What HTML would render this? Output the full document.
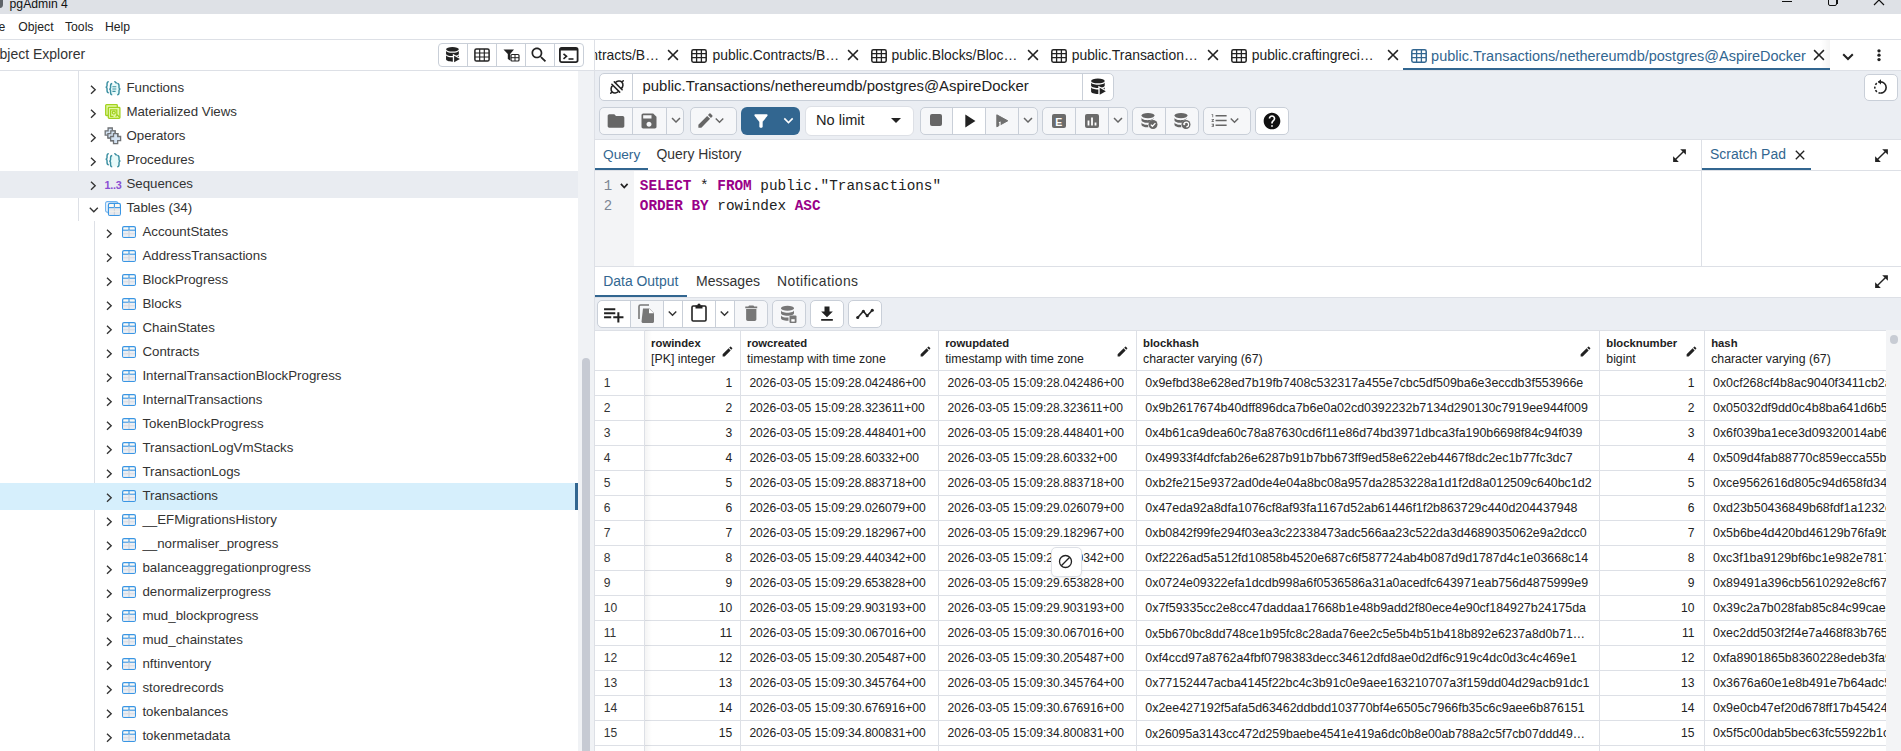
<!DOCTYPE html><html><head><meta charset="utf-8"><style>
html,body{margin:0;padding:0;}
body{width:1901px;height:751px;overflow:hidden;position:relative;background:#fff;font-family:"Liberation Sans",sans-serif;}
.t{position:absolute;white-space:nowrap;}
.b{position:absolute;box-sizing:border-box;}
</style></head><body>
<div class="b" style="left:0px;top:0px;width:1901px;height:13.5px;background:#dee1e6"></div>
<div class="b" style="left:1782px;top:1px;width:10px;height:1px;background:#111"></div>
<div class="b" style="left:1828px;top:-4px;width:9px;height:10px;border:1.2px solid #111;border-radius:2px"></div>
<div class="b" style="left:1836px;top:-2px;width:2px;height:6px;background:#111"></div>
<svg class="b" style="left:1873px;top:-6px;overflow:visible;" width="12" height="12" viewBox="0 0 12 12"><path d="M1 1L11 11M11 1L1 11" stroke="#111" stroke-width="1.2"/></svg>
<div class="b" style="left:-4px;top:-4px;width:7px;height:11.5px;background:#5f6368;border-radius:4px"></div>
<div class="t" style="left:9.6px;top:-1.74px;font-size:12.2px;line-height:13.63px;color:#111;font-weight:400;font-family:'Liberation Sans', sans-serif;">pgAdmin 4</div>
<div class="t" style="left:-1.5px;top:20.96px;font-size:12.2px;line-height:13.63px;color:#222;font-weight:400;font-family:'Liberation Sans', sans-serif;">e</div>
<div class="t" style="left:18.3px;top:20.96px;font-size:12.2px;line-height:13.63px;color:#222;font-weight:400;font-family:'Liberation Sans', sans-serif;">Object</div>
<div class="t" style="left:65px;top:20.96px;font-size:12.2px;line-height:13.63px;color:#222;font-weight:400;font-family:'Liberation Sans', sans-serif;">Tools</div>
<div class="t" style="left:105px;top:20.96px;font-size:12.2px;line-height:13.63px;color:#222;font-weight:400;font-family:'Liberation Sans', sans-serif;">Help</div>
<div class="b" style="left:0px;top:39px;width:1901px;height:1px;background:#dde0e6"></div>
<div class="t" style="left:-0.5px;top:47.13px;font-size:14px;line-height:15.64px;color:#333;font-weight:400;font-family:'Liberation Sans', sans-serif;">bject Explorer</div>
<div class="b" style="left:438px;top:43px;width:146px;height:24px;border:1px solid #c9cfd8;border-radius:4px;background:#fff"></div>
<div class="b" style="left:467px;top:43px;width:1px;height:24px;background:#c9cfd8"></div>
<div class="b" style="left:496px;top:43px;width:1px;height:24px;background:#c9cfd8"></div>
<div class="b" style="left:525px;top:43px;width:1px;height:24px;background:#c9cfd8"></div>
<div class="b" style="left:554px;top:43px;width:1px;height:24px;background:#c9cfd8"></div>
<svg class="b" style="left:444.5px;top:47px;overflow:visible;" width="16" height="16" viewBox="0 0 20 20"><ellipse cx="9.3" cy="2.9" rx="8" ry="2.8" fill="#222"/><path d="M1.3 4.4V8.3c0 1.6 3.6 2.9 8 2.9s8-1.3 8-2.9V4.4c0 1.6-3.6 2.9-8 2.9S1.3 6.0 1.3 4.4z" fill="#222"/><path d="M1.3 9.9V15.4c0 1.6 3.6 2.9 8 2.9s8-1.3 8-2.9V9.9c0 1.6-3.6 2.9-8 2.9S1.3 11.5 1.3 9.9z" fill="#222"/><path d="M9.8 8.4V21.6L21.2 15z" fill="#fff"/><path d="M11.4 10.9V19.1L18.6 15z" fill="#222"/></svg>
<svg class="b" style="left:473.5px;top:48px;overflow:visible;" width="16" height="14" viewBox="0 0 16 14"><rect x="0.9" y="0.9" width="14.2" height="12.2" rx="1.6" fill="none" stroke="#222" stroke-width="1.5"/><path d="M1 5H15M1 9H15M5.7 1V13M10.3 1V13" stroke="#222" stroke-width="1.15"/></svg>
<svg class="b" style="left:503px;top:48.5px;overflow:visible;" width="16" height="12.5" viewBox="0 0 16 12.5"><path d="M0.5 0.5H11L7.2 5V11.5L4.8 10V5z" fill="#222"/><rect x="8" y="5.5" width="8" height="6.5" rx="1" fill="none" stroke="#222" stroke-width="1.2"/><path d="M8 8.7H16M12 5.5V12" stroke="#222" stroke-width="1"/></svg>
<svg class="b" style="left:529px;top:45px;overflow:visible;" width="20" height="20" viewBox="0 0 24 24"><path d="M15.5 14h-.79l-.28-.27C15.41 12.59 16 11.11 16 9.5 16 5.91 13.09 3 9.5 3S3 5.91 3 9.5 5.91 16 9.5 16c1.61 0 3.09-.59 4.23-1.57l.27.28v.79l5 4.99L20.49 19l-4.99-5zm-6 0C7.01 14 5 11.99 5 9.5S7.01 5 9.5 5 14 7.01 14 9.5 11.99 14 9.5 14z" fill="#222"/></svg>
<svg class="b" style="left:559px;top:47px;overflow:visible;" width="19.5" height="16" viewBox="0 0 19.5 16"><rect x="0.9" y="0.9" width="17.7" height="14.2" rx="1.8" fill="none" stroke="#222" stroke-width="1.8"/><rect x="0.9" y="0.9" width="17.7" height="2.6" fill="#222"/><path d="M4.5 6.8L7.5 9.3L4.5 11.8" fill="none" stroke="#222" stroke-width="1.6"/><path d="M9.5 12H14.5" stroke="#222" stroke-width="1.6"/></svg>
<div class="b" style="left:0px;top:70px;width:594px;height:1px;background:#dde0e6"></div>
<div class="b" style="left:78px;top:71px;width:1px;height:150px;background:#dde0e6"></div>
<div class="b" style="left:94px;top:221px;width:1px;height:530px;background:#dde0e6"></div>
<div class="b" style="left:0px;top:171px;width:578px;height:27px;background:#e9ecf1"></div>
<div class="b" style="left:0px;top:483px;width:575px;height:27px;background:#d6effc"></div>
<div class="b" style="left:575px;top:483px;width:3px;height:27px;background:#326690"></div>
<svg class="b" style="left:89.6px;top:84.6px;overflow:visible;" width="7" height="10" viewBox="0 0 7 10"><path d="M1 0.8L5.2 4.8L1 8.8" fill="none" stroke="#333" stroke-width="1.35"/></svg>
<svg class="b" style="left:105px;top:80.9px;overflow:visible;" width="16" height="14.2" viewBox="0 0 16 14.2"><path d="M6.5 2.8H12.8C13.6 5 13.6 11 12.8 13.4H6.5C5.7 11 5.7 5 6.5 2.8z" fill="#e6fafa"/><path d="M3.8000000000000003 0.6C2.04 0.6 2.04 1.496 2.04 2.84V4.855999999999999C2.04 5.752 1.2400000000000002 6.199999999999999 0.6 6.199999999999999C1.2400000000000002 6.199999999999999 2.04 6.648 2.04 7.544V9.559999999999999C2.04 10.904 2.04 11.799999999999999 3.8000000000000003 11.799999999999999" fill="none" stroke="#3a8fa1" stroke-width="1.45"/><path d="M9.2 0.6C10.6 0.6 10.8 1.6 11.6 2.4" fill="none" stroke="#3a8fa1" stroke-width="1.45"/><path d="M7.2 2.6C5.550000000000001 2.6 5.550000000000001 3.496 5.550000000000001 4.84V6.856C5.550000000000001 7.752000000000001 4.800000000000001 8.2 4.2 8.2C4.800000000000001 8.2 5.550000000000001 8.648 5.550000000000001 9.544V11.559999999999999C5.550000000000001 12.904 5.550000000000001 13.799999999999999 7.2 13.799999999999999" fill="none" stroke="#3a8fa1" stroke-width="1.45"/><path d="M12.2 2.4C14.014999999999999 2.4 14.014999999999999 3.304 14.014999999999999 4.66V6.694000000000001C14.014999999999999 7.598000000000001 14.84 8.05 15.5 8.05C14.84 8.05 14.014999999999999 8.502 14.014999999999999 9.406V11.440000000000001C14.014999999999999 12.796000000000001 14.014999999999999 13.700000000000001 12.2 13.700000000000001" fill="none" stroke="#3a8fa1" stroke-width="1.45"/><path d="M7.4 5.8H11.3M7.4 8H11.3M7.4 10.4H10.6" stroke="#3a8fa1" stroke-width="1.1"/></svg>
<div class="t" style="left:126.4px;top:80.76px;font-size:13.3px;line-height:14.86px;color:#333;font-weight:400;font-family:'Liberation Sans', sans-serif;">Functions</div>
<svg class="b" style="left:89.6px;top:108.6px;overflow:visible;" width="7" height="10" viewBox="0 0 7 10"><path d="M1 0.8L5.2 4.8L1 8.8" fill="none" stroke="#333" stroke-width="1.35"/></svg>
<svg class="b" style="left:105px;top:104.4px;overflow:visible;" width="16" height="15" viewBox="0 0 16 15"><rect x="0.7" y="0.7" width="11.6" height="10.8" rx="0.8" fill="#e3f8a6" stroke="#a2d21f" stroke-width="1.3"/><rect x="3.3" y="3.4" width="11.6" height="11" rx="0.8" fill="#e3f8a6" stroke="#a2d21f" stroke-width="1.3"/><path d="M11.8 11.5V5.8H5.6V12.4H8.5" fill="none" stroke="#a2d21f" stroke-width="1.2"/><circle cx="8.8" cy="8.6" r="1.5" fill="none" stroke="#a2d21f" stroke-width="1.2"/><path d="M10.5 12.5L12.5 11L14.8 13.5" fill="none" stroke="#a2d21f" stroke-width="1.2"/></svg>
<div class="t" style="left:126.4px;top:104.76px;font-size:13.3px;line-height:14.86px;color:#333;font-weight:400;font-family:'Liberation Sans', sans-serif;">Materialized Views</div>
<svg class="b" style="left:89.6px;top:132.6px;overflow:visible;" width="7" height="10" viewBox="0 0 7 10"><path d="M1 0.8L5.2 4.8L1 8.8" fill="none" stroke="#333" stroke-width="1.35"/></svg>
<svg class="b" style="left:105px;top:128.0px;overflow:visible;" width="16" height="16" viewBox="0 0 16 16"><path d="M3.1 0.0H7.300000000000001V2.9H10.2V7.1H7.300000000000001V10.0H3.1V7.1H0.20000000000000018V2.9H3.1Z" fill="#d3e2f2" stroke="#6f7275" stroke-width="1.3"/><path d="M5.800000000000001 2.8H10.0V5.699999999999999H12.9V9.9H10.0V12.8H5.800000000000001V9.9H2.9000000000000004V5.699999999999999H5.800000000000001Z" fill="#d3e2f2" stroke="#6f7275" stroke-width="1.3"/><path d="M8.5 5.6H12.7V8.5H15.6V12.7H12.7V15.6H8.5V12.7H5.6V8.5H8.5Z" fill="#d3e2f2" stroke="#6f7275" stroke-width="1.3"/></svg>
<div class="t" style="left:126.4px;top:128.76px;font-size:13.3px;line-height:14.86px;color:#333;font-weight:400;font-family:'Liberation Sans', sans-serif;">Operators</div>
<svg class="b" style="left:89.6px;top:156.6px;overflow:visible;" width="7" height="10" viewBox="0 0 7 10"><path d="M1 0.8L5.2 4.8L1 8.8" fill="none" stroke="#333" stroke-width="1.35"/></svg>
<svg class="b" style="left:105px;top:152.9px;overflow:visible;" width="16" height="14.2" viewBox="0 0 16 14.2"><path d="M6.5 2.8H12.8C13.6 5 13.6 11 12.8 13.4H6.5C5.7 11 5.7 5 6.5 2.8z" fill="#e6fafa"/><path d="M3.8000000000000003 0.6C2.04 0.6 2.04 1.496 2.04 2.84V4.855999999999999C2.04 5.752 1.2400000000000002 6.199999999999999 0.6 6.199999999999999C1.2400000000000002 6.199999999999999 2.04 6.648 2.04 7.544V9.559999999999999C2.04 10.904 2.04 11.799999999999999 3.8000000000000003 11.799999999999999" fill="none" stroke="#3a8fa1" stroke-width="1.45"/><path d="M9.2 0.6C10.6 0.6 10.8 1.6 11.6 2.4" fill="none" stroke="#3a8fa1" stroke-width="1.45"/><path d="M7.2 2.6C5.550000000000001 2.6 5.550000000000001 3.496 5.550000000000001 4.84V6.856C5.550000000000001 7.752000000000001 4.800000000000001 8.2 4.2 8.2C4.800000000000001 8.2 5.550000000000001 8.648 5.550000000000001 9.544V11.559999999999999C5.550000000000001 12.904 5.550000000000001 13.799999999999999 7.2 13.799999999999999" fill="none" stroke="#3a8fa1" stroke-width="1.45"/><path d="M12.2 2.4C14.014999999999999 2.4 14.014999999999999 3.304 14.014999999999999 4.66V6.694000000000001C14.014999999999999 7.598000000000001 14.84 8.05 15.5 8.05C14.84 8.05 14.014999999999999 8.502 14.014999999999999 9.406V11.440000000000001C14.014999999999999 12.796000000000001 14.014999999999999 13.700000000000001 12.2 13.700000000000001" fill="none" stroke="#3a8fa1" stroke-width="1.45"/></svg>
<div class="t" style="left:126.4px;top:152.76px;font-size:13.3px;line-height:14.86px;color:#333;font-weight:400;font-family:'Liberation Sans', sans-serif;">Procedures</div>
<svg class="b" style="left:89.6px;top:180.6px;overflow:visible;" width="7" height="10" viewBox="0 0 7 10"><path d="M1 0.8L5.2 4.8L1 8.8" fill="none" stroke="#333" stroke-width="1.35"/></svg>
<div class="t" style="left:104.6px;top:178.63px;font-size:10.8px;line-height:12.06px;color:#8a4fd3;font-weight:700;font-family:'Liberation Sans', sans-serif;letter-spacing:-0.3px">1..3</div>
<div class="t" style="left:126.4px;top:176.76px;font-size:13.3px;line-height:14.86px;color:#333;font-weight:400;font-family:'Liberation Sans', sans-serif;">Sequences</div>
<svg class="b" style="left:88.5px;top:206.5px;overflow:visible;" width="10" height="6" viewBox="0 0 10 6"><path d="M0.8 0.8L4.8 4.8L8.8 0.8" fill="none" stroke="#333" stroke-width="1.35"/></svg>
<svg class="b" style="left:105px;top:200.8px;overflow:visible;" width="16" height="15" viewBox="0 0 16 15"><rect x="0.6" y="0.6" width="12" height="10.6" rx="1.6" fill="#f2f7fc" stroke="#6fb2ee" stroke-width="1.1"/><rect x="3.4" y="2.4" width="12" height="12" rx="1.6" fill="#fbf8f2" stroke="#3a96e4" stroke-width="1.2"/><rect x="4" y="6.8" width="10.8" height="7" fill="#e6e9ee"/><path d="M3.4 6.6H15.4" stroke="#3a96e4" stroke-width="1.1"/><path d="M9.4 2.8V6.6" stroke="#3a96e4" stroke-width="1.1"/><path d="M9.4 6.6V14" stroke="#cdd3dc" stroke-width="1.1"/><path d="M4 10.3H15" stroke="#f5f2ea" stroke-width="0.9"/></svg>
<div class="t" style="left:126.4px;top:200.76px;font-size:13.3px;line-height:14.86px;color:#333;font-weight:400;font-family:'Liberation Sans', sans-serif;">Tables (34)</div>
<svg class="b" style="left:105.9px;top:228.6px;overflow:visible;" width="7" height="10" viewBox="0 0 7 10"><path d="M1 0.8L5.2 4.8L1 8.8" fill="none" stroke="#333" stroke-width="1.35"/></svg>
<svg class="b" style="left:122px;top:226.2px;overflow:visible;" width="14" height="12" viewBox="0 0 14 12"><rect x="0.6" y="0.6" width="12.8" height="10.8" rx="1.4" fill="#fbfaf6" stroke="#3a96e4" stroke-width="1.2"/><rect x="1.2" y="4.5" width="11.6" height="6.3" fill="#eceef2"/><path d="M0.6 4.2H13.4" stroke="#3a96e4" stroke-width="1.1"/><path d="M7 1V4.2" stroke="#3a96e4" stroke-width="1.1"/><path d="M7 4.2V11" stroke="#c9d0da" stroke-width="1.1"/><path d="M1 7.8H13" stroke="#d5dbe3" stroke-width="1"/></svg>
<div class="t" style="left:142.4px;top:224.76px;font-size:13.3px;line-height:14.86px;color:#333;font-weight:400;font-family:'Liberation Sans', sans-serif;">AccountStates</div>
<svg class="b" style="left:105.9px;top:252.6px;overflow:visible;" width="7" height="10" viewBox="0 0 7 10"><path d="M1 0.8L5.2 4.8L1 8.8" fill="none" stroke="#333" stroke-width="1.35"/></svg>
<svg class="b" style="left:122px;top:250.2px;overflow:visible;" width="14" height="12" viewBox="0 0 14 12"><rect x="0.6" y="0.6" width="12.8" height="10.8" rx="1.4" fill="#fbfaf6" stroke="#3a96e4" stroke-width="1.2"/><rect x="1.2" y="4.5" width="11.6" height="6.3" fill="#eceef2"/><path d="M0.6 4.2H13.4" stroke="#3a96e4" stroke-width="1.1"/><path d="M7 1V4.2" stroke="#3a96e4" stroke-width="1.1"/><path d="M7 4.2V11" stroke="#c9d0da" stroke-width="1.1"/><path d="M1 7.8H13" stroke="#d5dbe3" stroke-width="1"/></svg>
<div class="t" style="left:142.4px;top:248.76px;font-size:13.3px;line-height:14.86px;color:#333;font-weight:400;font-family:'Liberation Sans', sans-serif;">AddressTransactions</div>
<svg class="b" style="left:105.9px;top:276.6px;overflow:visible;" width="7" height="10" viewBox="0 0 7 10"><path d="M1 0.8L5.2 4.8L1 8.8" fill="none" stroke="#333" stroke-width="1.35"/></svg>
<svg class="b" style="left:122px;top:274.2px;overflow:visible;" width="14" height="12" viewBox="0 0 14 12"><rect x="0.6" y="0.6" width="12.8" height="10.8" rx="1.4" fill="#fbfaf6" stroke="#3a96e4" stroke-width="1.2"/><rect x="1.2" y="4.5" width="11.6" height="6.3" fill="#eceef2"/><path d="M0.6 4.2H13.4" stroke="#3a96e4" stroke-width="1.1"/><path d="M7 1V4.2" stroke="#3a96e4" stroke-width="1.1"/><path d="M7 4.2V11" stroke="#c9d0da" stroke-width="1.1"/><path d="M1 7.8H13" stroke="#d5dbe3" stroke-width="1"/></svg>
<div class="t" style="left:142.4px;top:272.76px;font-size:13.3px;line-height:14.86px;color:#333;font-weight:400;font-family:'Liberation Sans', sans-serif;">BlockProgress</div>
<svg class="b" style="left:105.9px;top:300.6px;overflow:visible;" width="7" height="10" viewBox="0 0 7 10"><path d="M1 0.8L5.2 4.8L1 8.8" fill="none" stroke="#333" stroke-width="1.35"/></svg>
<svg class="b" style="left:122px;top:298.2px;overflow:visible;" width="14" height="12" viewBox="0 0 14 12"><rect x="0.6" y="0.6" width="12.8" height="10.8" rx="1.4" fill="#fbfaf6" stroke="#3a96e4" stroke-width="1.2"/><rect x="1.2" y="4.5" width="11.6" height="6.3" fill="#eceef2"/><path d="M0.6 4.2H13.4" stroke="#3a96e4" stroke-width="1.1"/><path d="M7 1V4.2" stroke="#3a96e4" stroke-width="1.1"/><path d="M7 4.2V11" stroke="#c9d0da" stroke-width="1.1"/><path d="M1 7.8H13" stroke="#d5dbe3" stroke-width="1"/></svg>
<div class="t" style="left:142.4px;top:296.76px;font-size:13.3px;line-height:14.86px;color:#333;font-weight:400;font-family:'Liberation Sans', sans-serif;">Blocks</div>
<svg class="b" style="left:105.9px;top:324.6px;overflow:visible;" width="7" height="10" viewBox="0 0 7 10"><path d="M1 0.8L5.2 4.8L1 8.8" fill="none" stroke="#333" stroke-width="1.35"/></svg>
<svg class="b" style="left:122px;top:322.2px;overflow:visible;" width="14" height="12" viewBox="0 0 14 12"><rect x="0.6" y="0.6" width="12.8" height="10.8" rx="1.4" fill="#fbfaf6" stroke="#3a96e4" stroke-width="1.2"/><rect x="1.2" y="4.5" width="11.6" height="6.3" fill="#eceef2"/><path d="M0.6 4.2H13.4" stroke="#3a96e4" stroke-width="1.1"/><path d="M7 1V4.2" stroke="#3a96e4" stroke-width="1.1"/><path d="M7 4.2V11" stroke="#c9d0da" stroke-width="1.1"/><path d="M1 7.8H13" stroke="#d5dbe3" stroke-width="1"/></svg>
<div class="t" style="left:142.4px;top:320.76px;font-size:13.3px;line-height:14.86px;color:#333;font-weight:400;font-family:'Liberation Sans', sans-serif;">ChainStates</div>
<svg class="b" style="left:105.9px;top:348.6px;overflow:visible;" width="7" height="10" viewBox="0 0 7 10"><path d="M1 0.8L5.2 4.8L1 8.8" fill="none" stroke="#333" stroke-width="1.35"/></svg>
<svg class="b" style="left:122px;top:346.2px;overflow:visible;" width="14" height="12" viewBox="0 0 14 12"><rect x="0.6" y="0.6" width="12.8" height="10.8" rx="1.4" fill="#fbfaf6" stroke="#3a96e4" stroke-width="1.2"/><rect x="1.2" y="4.5" width="11.6" height="6.3" fill="#eceef2"/><path d="M0.6 4.2H13.4" stroke="#3a96e4" stroke-width="1.1"/><path d="M7 1V4.2" stroke="#3a96e4" stroke-width="1.1"/><path d="M7 4.2V11" stroke="#c9d0da" stroke-width="1.1"/><path d="M1 7.8H13" stroke="#d5dbe3" stroke-width="1"/></svg>
<div class="t" style="left:142.4px;top:344.76px;font-size:13.3px;line-height:14.86px;color:#333;font-weight:400;font-family:'Liberation Sans', sans-serif;">Contracts</div>
<svg class="b" style="left:105.9px;top:372.6px;overflow:visible;" width="7" height="10" viewBox="0 0 7 10"><path d="M1 0.8L5.2 4.8L1 8.8" fill="none" stroke="#333" stroke-width="1.35"/></svg>
<svg class="b" style="left:122px;top:370.2px;overflow:visible;" width="14" height="12" viewBox="0 0 14 12"><rect x="0.6" y="0.6" width="12.8" height="10.8" rx="1.4" fill="#fbfaf6" stroke="#3a96e4" stroke-width="1.2"/><rect x="1.2" y="4.5" width="11.6" height="6.3" fill="#eceef2"/><path d="M0.6 4.2H13.4" stroke="#3a96e4" stroke-width="1.1"/><path d="M7 1V4.2" stroke="#3a96e4" stroke-width="1.1"/><path d="M7 4.2V11" stroke="#c9d0da" stroke-width="1.1"/><path d="M1 7.8H13" stroke="#d5dbe3" stroke-width="1"/></svg>
<div class="t" style="left:142.4px;top:368.76px;font-size:13.3px;line-height:14.86px;color:#333;font-weight:400;font-family:'Liberation Sans', sans-serif;">InternalTransactionBlockProgress</div>
<svg class="b" style="left:105.9px;top:396.6px;overflow:visible;" width="7" height="10" viewBox="0 0 7 10"><path d="M1 0.8L5.2 4.8L1 8.8" fill="none" stroke="#333" stroke-width="1.35"/></svg>
<svg class="b" style="left:122px;top:394.2px;overflow:visible;" width="14" height="12" viewBox="0 0 14 12"><rect x="0.6" y="0.6" width="12.8" height="10.8" rx="1.4" fill="#fbfaf6" stroke="#3a96e4" stroke-width="1.2"/><rect x="1.2" y="4.5" width="11.6" height="6.3" fill="#eceef2"/><path d="M0.6 4.2H13.4" stroke="#3a96e4" stroke-width="1.1"/><path d="M7 1V4.2" stroke="#3a96e4" stroke-width="1.1"/><path d="M7 4.2V11" stroke="#c9d0da" stroke-width="1.1"/><path d="M1 7.8H13" stroke="#d5dbe3" stroke-width="1"/></svg>
<div class="t" style="left:142.4px;top:392.76px;font-size:13.3px;line-height:14.86px;color:#333;font-weight:400;font-family:'Liberation Sans', sans-serif;">InternalTransactions</div>
<svg class="b" style="left:105.9px;top:420.6px;overflow:visible;" width="7" height="10" viewBox="0 0 7 10"><path d="M1 0.8L5.2 4.8L1 8.8" fill="none" stroke="#333" stroke-width="1.35"/></svg>
<svg class="b" style="left:122px;top:418.2px;overflow:visible;" width="14" height="12" viewBox="0 0 14 12"><rect x="0.6" y="0.6" width="12.8" height="10.8" rx="1.4" fill="#fbfaf6" stroke="#3a96e4" stroke-width="1.2"/><rect x="1.2" y="4.5" width="11.6" height="6.3" fill="#eceef2"/><path d="M0.6 4.2H13.4" stroke="#3a96e4" stroke-width="1.1"/><path d="M7 1V4.2" stroke="#3a96e4" stroke-width="1.1"/><path d="M7 4.2V11" stroke="#c9d0da" stroke-width="1.1"/><path d="M1 7.8H13" stroke="#d5dbe3" stroke-width="1"/></svg>
<div class="t" style="left:142.4px;top:416.76px;font-size:13.3px;line-height:14.86px;color:#333;font-weight:400;font-family:'Liberation Sans', sans-serif;">TokenBlockProgress</div>
<svg class="b" style="left:105.9px;top:444.6px;overflow:visible;" width="7" height="10" viewBox="0 0 7 10"><path d="M1 0.8L5.2 4.8L1 8.8" fill="none" stroke="#333" stroke-width="1.35"/></svg>
<svg class="b" style="left:122px;top:442.2px;overflow:visible;" width="14" height="12" viewBox="0 0 14 12"><rect x="0.6" y="0.6" width="12.8" height="10.8" rx="1.4" fill="#fbfaf6" stroke="#3a96e4" stroke-width="1.2"/><rect x="1.2" y="4.5" width="11.6" height="6.3" fill="#eceef2"/><path d="M0.6 4.2H13.4" stroke="#3a96e4" stroke-width="1.1"/><path d="M7 1V4.2" stroke="#3a96e4" stroke-width="1.1"/><path d="M7 4.2V11" stroke="#c9d0da" stroke-width="1.1"/><path d="M1 7.8H13" stroke="#d5dbe3" stroke-width="1"/></svg>
<div class="t" style="left:142.4px;top:440.76px;font-size:13.3px;line-height:14.86px;color:#333;font-weight:400;font-family:'Liberation Sans', sans-serif;">TransactionLogVmStacks</div>
<svg class="b" style="left:105.9px;top:468.6px;overflow:visible;" width="7" height="10" viewBox="0 0 7 10"><path d="M1 0.8L5.2 4.8L1 8.8" fill="none" stroke="#333" stroke-width="1.35"/></svg>
<svg class="b" style="left:122px;top:466.2px;overflow:visible;" width="14" height="12" viewBox="0 0 14 12"><rect x="0.6" y="0.6" width="12.8" height="10.8" rx="1.4" fill="#fbfaf6" stroke="#3a96e4" stroke-width="1.2"/><rect x="1.2" y="4.5" width="11.6" height="6.3" fill="#eceef2"/><path d="M0.6 4.2H13.4" stroke="#3a96e4" stroke-width="1.1"/><path d="M7 1V4.2" stroke="#3a96e4" stroke-width="1.1"/><path d="M7 4.2V11" stroke="#c9d0da" stroke-width="1.1"/><path d="M1 7.8H13" stroke="#d5dbe3" stroke-width="1"/></svg>
<div class="t" style="left:142.4px;top:464.76px;font-size:13.3px;line-height:14.86px;color:#333;font-weight:400;font-family:'Liberation Sans', sans-serif;">TransactionLogs</div>
<svg class="b" style="left:105.9px;top:492.6px;overflow:visible;" width="7" height="10" viewBox="0 0 7 10"><path d="M1 0.8L5.2 4.8L1 8.8" fill="none" stroke="#333" stroke-width="1.35"/></svg>
<svg class="b" style="left:122px;top:490.2px;overflow:visible;" width="14" height="12" viewBox="0 0 14 12"><rect x="0.6" y="0.6" width="12.8" height="10.8" rx="1.4" fill="#fbfaf6" stroke="#3a96e4" stroke-width="1.2"/><rect x="1.2" y="4.5" width="11.6" height="6.3" fill="#eceef2"/><path d="M0.6 4.2H13.4" stroke="#3a96e4" stroke-width="1.1"/><path d="M7 1V4.2" stroke="#3a96e4" stroke-width="1.1"/><path d="M7 4.2V11" stroke="#c9d0da" stroke-width="1.1"/><path d="M1 7.8H13" stroke="#d5dbe3" stroke-width="1"/></svg>
<div class="t" style="left:142.4px;top:488.76px;font-size:13.3px;line-height:14.86px;color:#333;font-weight:400;font-family:'Liberation Sans', sans-serif;">Transactions</div>
<svg class="b" style="left:105.9px;top:516.6px;overflow:visible;" width="7" height="10" viewBox="0 0 7 10"><path d="M1 0.8L5.2 4.8L1 8.8" fill="none" stroke="#333" stroke-width="1.35"/></svg>
<svg class="b" style="left:122px;top:514.2px;overflow:visible;" width="14" height="12" viewBox="0 0 14 12"><rect x="0.6" y="0.6" width="12.8" height="10.8" rx="1.4" fill="#fbfaf6" stroke="#3a96e4" stroke-width="1.2"/><rect x="1.2" y="4.5" width="11.6" height="6.3" fill="#eceef2"/><path d="M0.6 4.2H13.4" stroke="#3a96e4" stroke-width="1.1"/><path d="M7 1V4.2" stroke="#3a96e4" stroke-width="1.1"/><path d="M7 4.2V11" stroke="#c9d0da" stroke-width="1.1"/><path d="M1 7.8H13" stroke="#d5dbe3" stroke-width="1"/></svg>
<div class="t" style="left:142.4px;top:512.76px;font-size:13.3px;line-height:14.86px;color:#333;font-weight:400;font-family:'Liberation Sans', sans-serif;">__EFMigrationsHistory</div>
<svg class="b" style="left:105.9px;top:540.6px;overflow:visible;" width="7" height="10" viewBox="0 0 7 10"><path d="M1 0.8L5.2 4.8L1 8.8" fill="none" stroke="#333" stroke-width="1.35"/></svg>
<svg class="b" style="left:122px;top:538.2px;overflow:visible;" width="14" height="12" viewBox="0 0 14 12"><rect x="0.6" y="0.6" width="12.8" height="10.8" rx="1.4" fill="#fbfaf6" stroke="#3a96e4" stroke-width="1.2"/><rect x="1.2" y="4.5" width="11.6" height="6.3" fill="#eceef2"/><path d="M0.6 4.2H13.4" stroke="#3a96e4" stroke-width="1.1"/><path d="M7 1V4.2" stroke="#3a96e4" stroke-width="1.1"/><path d="M7 4.2V11" stroke="#c9d0da" stroke-width="1.1"/><path d="M1 7.8H13" stroke="#d5dbe3" stroke-width="1"/></svg>
<div class="t" style="left:142.4px;top:536.76px;font-size:13.3px;line-height:14.86px;color:#333;font-weight:400;font-family:'Liberation Sans', sans-serif;">__normaliser_progress</div>
<svg class="b" style="left:105.9px;top:564.6px;overflow:visible;" width="7" height="10" viewBox="0 0 7 10"><path d="M1 0.8L5.2 4.8L1 8.8" fill="none" stroke="#333" stroke-width="1.35"/></svg>
<svg class="b" style="left:122px;top:562.2px;overflow:visible;" width="14" height="12" viewBox="0 0 14 12"><rect x="0.6" y="0.6" width="12.8" height="10.8" rx="1.4" fill="#fbfaf6" stroke="#3a96e4" stroke-width="1.2"/><rect x="1.2" y="4.5" width="11.6" height="6.3" fill="#eceef2"/><path d="M0.6 4.2H13.4" stroke="#3a96e4" stroke-width="1.1"/><path d="M7 1V4.2" stroke="#3a96e4" stroke-width="1.1"/><path d="M7 4.2V11" stroke="#c9d0da" stroke-width="1.1"/><path d="M1 7.8H13" stroke="#d5dbe3" stroke-width="1"/></svg>
<div class="t" style="left:142.4px;top:560.76px;font-size:13.3px;line-height:14.86px;color:#333;font-weight:400;font-family:'Liberation Sans', sans-serif;">balanceaggregationprogress</div>
<svg class="b" style="left:105.9px;top:588.6px;overflow:visible;" width="7" height="10" viewBox="0 0 7 10"><path d="M1 0.8L5.2 4.8L1 8.8" fill="none" stroke="#333" stroke-width="1.35"/></svg>
<svg class="b" style="left:122px;top:586.2px;overflow:visible;" width="14" height="12" viewBox="0 0 14 12"><rect x="0.6" y="0.6" width="12.8" height="10.8" rx="1.4" fill="#fbfaf6" stroke="#3a96e4" stroke-width="1.2"/><rect x="1.2" y="4.5" width="11.6" height="6.3" fill="#eceef2"/><path d="M0.6 4.2H13.4" stroke="#3a96e4" stroke-width="1.1"/><path d="M7 1V4.2" stroke="#3a96e4" stroke-width="1.1"/><path d="M7 4.2V11" stroke="#c9d0da" stroke-width="1.1"/><path d="M1 7.8H13" stroke="#d5dbe3" stroke-width="1"/></svg>
<div class="t" style="left:142.4px;top:584.76px;font-size:13.3px;line-height:14.86px;color:#333;font-weight:400;font-family:'Liberation Sans', sans-serif;">denormalizerprogress</div>
<svg class="b" style="left:105.9px;top:612.6px;overflow:visible;" width="7" height="10" viewBox="0 0 7 10"><path d="M1 0.8L5.2 4.8L1 8.8" fill="none" stroke="#333" stroke-width="1.35"/></svg>
<svg class="b" style="left:122px;top:610.2px;overflow:visible;" width="14" height="12" viewBox="0 0 14 12"><rect x="0.6" y="0.6" width="12.8" height="10.8" rx="1.4" fill="#fbfaf6" stroke="#3a96e4" stroke-width="1.2"/><rect x="1.2" y="4.5" width="11.6" height="6.3" fill="#eceef2"/><path d="M0.6 4.2H13.4" stroke="#3a96e4" stroke-width="1.1"/><path d="M7 1V4.2" stroke="#3a96e4" stroke-width="1.1"/><path d="M7 4.2V11" stroke="#c9d0da" stroke-width="1.1"/><path d="M1 7.8H13" stroke="#d5dbe3" stroke-width="1"/></svg>
<div class="t" style="left:142.4px;top:608.76px;font-size:13.3px;line-height:14.86px;color:#333;font-weight:400;font-family:'Liberation Sans', sans-serif;">mud_blockprogress</div>
<svg class="b" style="left:105.9px;top:636.6px;overflow:visible;" width="7" height="10" viewBox="0 0 7 10"><path d="M1 0.8L5.2 4.8L1 8.8" fill="none" stroke="#333" stroke-width="1.35"/></svg>
<svg class="b" style="left:122px;top:634.2px;overflow:visible;" width="14" height="12" viewBox="0 0 14 12"><rect x="0.6" y="0.6" width="12.8" height="10.8" rx="1.4" fill="#fbfaf6" stroke="#3a96e4" stroke-width="1.2"/><rect x="1.2" y="4.5" width="11.6" height="6.3" fill="#eceef2"/><path d="M0.6 4.2H13.4" stroke="#3a96e4" stroke-width="1.1"/><path d="M7 1V4.2" stroke="#3a96e4" stroke-width="1.1"/><path d="M7 4.2V11" stroke="#c9d0da" stroke-width="1.1"/><path d="M1 7.8H13" stroke="#d5dbe3" stroke-width="1"/></svg>
<div class="t" style="left:142.4px;top:632.76px;font-size:13.3px;line-height:14.86px;color:#333;font-weight:400;font-family:'Liberation Sans', sans-serif;">mud_chainstates</div>
<svg class="b" style="left:105.9px;top:660.6px;overflow:visible;" width="7" height="10" viewBox="0 0 7 10"><path d="M1 0.8L5.2 4.8L1 8.8" fill="none" stroke="#333" stroke-width="1.35"/></svg>
<svg class="b" style="left:122px;top:658.2px;overflow:visible;" width="14" height="12" viewBox="0 0 14 12"><rect x="0.6" y="0.6" width="12.8" height="10.8" rx="1.4" fill="#fbfaf6" stroke="#3a96e4" stroke-width="1.2"/><rect x="1.2" y="4.5" width="11.6" height="6.3" fill="#eceef2"/><path d="M0.6 4.2H13.4" stroke="#3a96e4" stroke-width="1.1"/><path d="M7 1V4.2" stroke="#3a96e4" stroke-width="1.1"/><path d="M7 4.2V11" stroke="#c9d0da" stroke-width="1.1"/><path d="M1 7.8H13" stroke="#d5dbe3" stroke-width="1"/></svg>
<div class="t" style="left:142.4px;top:656.76px;font-size:13.3px;line-height:14.86px;color:#333;font-weight:400;font-family:'Liberation Sans', sans-serif;">nftinventory</div>
<svg class="b" style="left:105.9px;top:684.6px;overflow:visible;" width="7" height="10" viewBox="0 0 7 10"><path d="M1 0.8L5.2 4.8L1 8.8" fill="none" stroke="#333" stroke-width="1.35"/></svg>
<svg class="b" style="left:122px;top:682.2px;overflow:visible;" width="14" height="12" viewBox="0 0 14 12"><rect x="0.6" y="0.6" width="12.8" height="10.8" rx="1.4" fill="#fbfaf6" stroke="#3a96e4" stroke-width="1.2"/><rect x="1.2" y="4.5" width="11.6" height="6.3" fill="#eceef2"/><path d="M0.6 4.2H13.4" stroke="#3a96e4" stroke-width="1.1"/><path d="M7 1V4.2" stroke="#3a96e4" stroke-width="1.1"/><path d="M7 4.2V11" stroke="#c9d0da" stroke-width="1.1"/><path d="M1 7.8H13" stroke="#d5dbe3" stroke-width="1"/></svg>
<div class="t" style="left:142.4px;top:680.76px;font-size:13.3px;line-height:14.86px;color:#333;font-weight:400;font-family:'Liberation Sans', sans-serif;">storedrecords</div>
<svg class="b" style="left:105.9px;top:708.6px;overflow:visible;" width="7" height="10" viewBox="0 0 7 10"><path d="M1 0.8L5.2 4.8L1 8.8" fill="none" stroke="#333" stroke-width="1.35"/></svg>
<svg class="b" style="left:122px;top:706.2px;overflow:visible;" width="14" height="12" viewBox="0 0 14 12"><rect x="0.6" y="0.6" width="12.8" height="10.8" rx="1.4" fill="#fbfaf6" stroke="#3a96e4" stroke-width="1.2"/><rect x="1.2" y="4.5" width="11.6" height="6.3" fill="#eceef2"/><path d="M0.6 4.2H13.4" stroke="#3a96e4" stroke-width="1.1"/><path d="M7 1V4.2" stroke="#3a96e4" stroke-width="1.1"/><path d="M7 4.2V11" stroke="#c9d0da" stroke-width="1.1"/><path d="M1 7.8H13" stroke="#d5dbe3" stroke-width="1"/></svg>
<div class="t" style="left:142.4px;top:704.76px;font-size:13.3px;line-height:14.86px;color:#333;font-weight:400;font-family:'Liberation Sans', sans-serif;">tokenbalances</div>
<svg class="b" style="left:105.9px;top:732.6px;overflow:visible;" width="7" height="10" viewBox="0 0 7 10"><path d="M1 0.8L5.2 4.8L1 8.8" fill="none" stroke="#333" stroke-width="1.35"/></svg>
<svg class="b" style="left:122px;top:730.2px;overflow:visible;" width="14" height="12" viewBox="0 0 14 12"><rect x="0.6" y="0.6" width="12.8" height="10.8" rx="1.4" fill="#fbfaf6" stroke="#3a96e4" stroke-width="1.2"/><rect x="1.2" y="4.5" width="11.6" height="6.3" fill="#eceef2"/><path d="M0.6 4.2H13.4" stroke="#3a96e4" stroke-width="1.1"/><path d="M7 1V4.2" stroke="#3a96e4" stroke-width="1.1"/><path d="M7 4.2V11" stroke="#c9d0da" stroke-width="1.1"/><path d="M1 7.8H13" stroke="#d5dbe3" stroke-width="1"/></svg>
<div class="t" style="left:142.4px;top:728.76px;font-size:13.3px;line-height:14.86px;color:#333;font-weight:400;font-family:'Liberation Sans', sans-serif;">tokenmetadata</div>
<svg class="b" style="left:105.9px;top:756.6px;overflow:visible;" width="7" height="10" viewBox="0 0 7 10"><path d="M1 0.8L5.2 4.8L1 8.8" fill="none" stroke="#333" stroke-width="1.35"/></svg>
<svg class="b" style="left:122px;top:754.2px;overflow:visible;" width="14" height="12" viewBox="0 0 14 12"><rect x="0.6" y="0.6" width="12.8" height="10.8" rx="1.4" fill="#fbfaf6" stroke="#3a96e4" stroke-width="1.2"/><rect x="1.2" y="4.5" width="11.6" height="6.3" fill="#eceef2"/><path d="M0.6 4.2H13.4" stroke="#3a96e4" stroke-width="1.1"/><path d="M7 1V4.2" stroke="#3a96e4" stroke-width="1.1"/><path d="M7 4.2V11" stroke="#c9d0da" stroke-width="1.1"/><path d="M1 7.8H13" stroke="#d5dbe3" stroke-width="1"/></svg>
<div class="t" style="left:142.4px;top:752.76px;font-size:13.3px;line-height:14.86px;color:#333;font-weight:400;font-family:'Liberation Sans', sans-serif;">tokenprogress</div>
<div class="b" style="left:578px;top:71px;width:16px;height:680px;background:#f0f2f5"></div>
<div class="b" style="left:582px;top:358px;width:8px;height:400px;background:#c6cad3;border-radius:4px"></div>
<div class="b" style="left:594px;top:39px;width:1px;height:712px;background:#dde0e6"></div>
<div class="b" style="left:595px;top:40px;width:1306px;height:30px;overflow:hidden">
<div class="t" style="left:-62.60px;top:8.42px;font-size:13.9px;line-height:15.53px;color:#222;font-weight:400;">public.Contracts/B…</div>
<svg class="b" style="left:71.00px;top:8.00px" width="14" height="14" viewBox="3 3 18 18"><path d="M19 6.41 17.59 5 12 10.59 6.41 5 5 6.41 10.59 12 5 17.59 6.41 19 12 13.41 17.59 19 19 17.59 13.41 12z" fill="#222"/></svg>
<svg class="b" style="left:96.00px;top:8.70px" width="16" height="14" viewBox="0 0 16 14"><rect x="0.8" y="0.8" width="14.4" height="12.4" rx="1.6" fill="none" stroke="#222" stroke-width="1.5"/><path d="M0.8 4.6H15.2M0.8 8.6H15.2M5.6 0.8V13.2M10.4 0.8V13.2" stroke="#222" stroke-width="1.3"/></svg>
<div class="t" style="left:117.60px;top:8.42px;font-size:13.9px;line-height:15.53px;color:#222;font-weight:400;">public.Contracts/B…</div>
<svg class="b" style="left:251.00px;top:8.00px" width="14" height="14" viewBox="3 3 18 18"><path d="M19 6.41 17.59 5 12 10.59 6.41 5 5 6.41 10.59 12 5 17.59 6.41 19 12 13.41 17.59 19 19 17.59 13.41 12z" fill="#222"/></svg>
<svg class="b" style="left:276.00px;top:8.70px" width="16" height="14" viewBox="0 0 16 14"><rect x="0.8" y="0.8" width="14.4" height="12.4" rx="1.6" fill="none" stroke="#222" stroke-width="1.5"/><path d="M0.8 4.6H15.2M0.8 8.6H15.2M5.6 0.8V13.2M10.4 0.8V13.2" stroke="#222" stroke-width="1.3"/></svg>
<div class="t" style="left:296.50px;top:8.42px;font-size:13.9px;line-height:15.53px;color:#222;font-weight:400;">public.Blocks/Bloc…</div>
<svg class="b" style="left:431.00px;top:8.00px" width="14" height="14" viewBox="3 3 18 18"><path d="M19 6.41 17.59 5 12 10.59 6.41 5 5 6.41 10.59 12 5 17.59 6.41 19 12 13.41 17.59 19 19 17.59 13.41 12z" fill="#222"/></svg>
<svg class="b" style="left:456.00px;top:8.70px" width="16" height="14" viewBox="0 0 16 14"><rect x="0.8" y="0.8" width="14.4" height="12.4" rx="1.6" fill="none" stroke="#222" stroke-width="1.5"/><path d="M0.8 4.6H15.2M0.8 8.6H15.2M5.6 0.8V13.2M10.4 0.8V13.2" stroke="#222" stroke-width="1.3"/></svg>
<div class="t" style="left:476.70px;top:8.42px;font-size:13.9px;line-height:15.53px;color:#222;font-weight:400;">public.Transaction…</div>
<svg class="b" style="left:611.00px;top:8.00px" width="14" height="14" viewBox="3 3 18 18"><path d="M19 6.41 17.59 5 12 10.59 6.41 5 5 6.41 10.59 12 5 17.59 6.41 19 12 13.41 17.59 19 19 17.59 13.41 12z" fill="#222"/></svg>
<svg class="b" style="left:636.00px;top:8.70px" width="16" height="14" viewBox="0 0 16 14"><rect x="0.8" y="0.8" width="14.4" height="12.4" rx="1.6" fill="none" stroke="#222" stroke-width="1.5"/><path d="M0.8 4.6H15.2M0.8 8.6H15.2M5.6 0.8V13.2M10.4 0.8V13.2" stroke="#222" stroke-width="1.3"/></svg>
<div class="t" style="left:656.70px;top:8.42px;font-size:13.9px;line-height:15.53px;color:#222;font-weight:400;">public.craftingreci…</div>
<svg class="b" style="left:791.00px;top:8.00px" width="14" height="14" viewBox="3 3 18 18"><path d="M19 6.41 17.59 5 12 10.59 6.41 5 5 6.41 10.59 12 5 17.59 6.41 19 12 13.41 17.59 19 19 17.59 13.41 12z" fill="#222"/></svg>
<svg class="b" style="left:816.00px;top:8.70px" width="16" height="14" viewBox="0 0 16 14"><rect x="0.8" y="0.8" width="14.4" height="12.4" rx="1.6" fill="none" stroke="#326690" stroke-width="1.5"/><path d="M0.8 4.6H15.2M0.8 8.6H15.2M5.6 0.8V13.2M10.4 0.8V13.2" stroke="#326690" stroke-width="1.3"/></svg>
<div class="t" style="left:836.10px;top:7.89px;font-size:14.49px;line-height:16.19px;color:#326690;font-weight:400;">public.Transactions/nethereumdb/postgres@AspireDocker</div>
<svg class="b" style="left:1217.00px;top:8.00px" width="14" height="14" viewBox="3 3 18 18"><path d="M19 6.41 17.59 5 12 10.59 6.41 5 5 6.41 10.59 12 5 17.59 6.41 19 12 13.41 17.59 19 19 17.59 13.41 12z" fill="#222"/></svg>
<div class="b" style="left:808px;top:28px;width:427px;height:2px;background:#326690"></div>
</div>
<div class="b" style="left:1821px;top:40px;width:9px;height:28px;background:linear-gradient(to right,rgba(0,0,0,0),rgba(0,0,0,0.045))"></div>
<svg class="b" style="left:1841.5px;top:52.5px;overflow:visible;" width="12" height="8" viewBox="0 0 12 8"><path d="M1.2 1.2L6 6L10.8 1.2" fill="none" stroke="#222" stroke-width="2"/></svg>
<svg class="b" style="left:1875px;top:48px;overflow:visible;" width="8" height="14" viewBox="0 0 8 14"><circle cx="4" cy="2.8" r="1.65" fill="#222"/><circle cx="4" cy="7.2" r="1.65" fill="#222"/><circle cx="4" cy="11.6" r="1.65" fill="#222"/></svg>
<div class="b" style="left:595px;top:70px;width:1306px;height:1px;background:#dde0e6"></div>
<div class="b" style="left:595px;top:71px;width:1306px;height:68px;background:#ebeef3"></div>
<div class="b" style="left:595px;top:139px;width:1306px;height:1px;background:#dde0e6"></div>
<div class="b" style="left:599px;top:73px;width:515px;height:27.5px;background:#fff;border:1px solid #c9cfd8;border-radius:5px"></div>
<div class="b" style="left:632px;top:73px;width:1px;height:27.5px;background:#c9cfd8"></div>
<div class="b" style="left:1082px;top:73px;width:1px;height:27.5px;background:#c9cfd8"></div>
<div class="t" style="left:642.5px;top:78.29px;font-size:14.93px;line-height:16.68px;color:#222;font-weight:400;font-family:'Liberation Sans', sans-serif;">public.Transactions/nethereumdb/postgres@AspireDocker</div>
<svg class="b" style="left:607.5px;top:78.3px;overflow:visible;" width="18" height="18" viewBox="-7 -7 14 14"><g transform="rotate(45)" fill="none" stroke="#222" stroke-width="1.2" stroke-linecap="round"><path d="M-4.3 -1.35H4.3M-3.3 -1.35A3.3 4.0 0 0 1 3.3 -1.35M0 -5.35V-6.9"/><path d="M-4.3 1.35H4.3M-3.3 1.35A3.3 4.0 0 0 0 3.3 1.35M0 5.35V6.9"/></g></svg>
<svg class="b" style="left:1090px;top:78px;overflow:visible;" width="17" height="18" viewBox="0 0 20 20"><ellipse cx="9.3" cy="2.9" rx="8" ry="2.8" fill="#222"/><path d="M1.3 4.4V8.3c0 1.6 3.6 2.9 8 2.9s8-1.3 8-2.9V4.4c0 1.6-3.6 2.9-8 2.9S1.3 6.0 1.3 4.4z" fill="#222"/><path d="M1.3 9.9V15.4c0 1.6 3.6 2.9 8 2.9s8-1.3 8-2.9V9.9c0 1.6-3.6 2.9-8 2.9S1.3 11.5 1.3 9.9z" fill="#222"/><path d="M9.8 8.4V21.6L21.2 15z" fill="#fff"/><path d="M11.4 10.9V19.1L18.6 15z" fill="#222"/></svg>
<div class="b" style="left:1864px;top:73.5px;width:34px;height:27.5px;background:#fff;border:1px solid #c9cfd8;border-radius:5px"></div>
<svg class="b" style="left:1872px;top:79px;overflow:visible;" width="17" height="17" viewBox="0 0 18 18"><g fill="none" stroke="#222" stroke-width="1.7"><path d="M9 3A6 6 0 0 1 9 15"/><path d="M9 15A6 6 0 0 1 9 3" stroke-dasharray="2.2 1.8"/></g><path d="M9.5 0.2L6.2 3L9.5 5.8z" fill="#222"/></svg>
<div class="b" style="left:599px;top:107px;width:85px;height:27.5px;background:#f6f7f9;border:1px solid #c9cfd8;border-radius:5px"></div>
<div class="b" style="left:632px;top:107px;width:1px;height:27.5px;background:#c9cfd8"></div>
<div class="b" style="left:666px;top:107px;width:1px;height:27.5px;background:#c9cfd8"></div>
<svg class="b" style="left:606px;top:111px;overflow:visible;" width="20" height="20" viewBox="0 0 24 24"><path d="M10 4H4c-1.1 0-1.99.9-1.99 2L2 18c0 1.1.9 2 2 2h16c1.1 0 2-.9 2-2V8c0-1.1-.9-2-2-2h-8l-2-2z" fill="#666"/></svg>
<svg class="b" style="left:639px;top:111px;overflow:visible;" width="20" height="20" viewBox="0 0 24 24"><path d="M17 3H5c-1.11 0-2 .9-2 2v14c0 1.1.89 2 2 2h14c1.1 0 2-.9 2-2V7l-4-4zm-5 16c-1.66 0-3-1.34-3-3s1.34-3 3-3 3 1.34 3 3-1.34 3-3 3zm3-10H5V5h10v4z" fill="#666"/></svg>
<svg class="b" style="left:667px;top:111px;overflow:visible;" width="18" height="18" viewBox="0 0 24 24"><path d="M16.59 8.59 12 13.17 7.41 8.59 6 10l6 6 6-6z" fill="#666"/></svg>
<div class="b" style="left:689.5px;top:107px;width:47.5px;height:27.5px;background:#f6f7f9;border:1px solid #c9cfd8;border-radius:5px"></div>
<svg class="b" style="left:696.2px;top:110.9px;overflow:visible;" width="19" height="19" viewBox="0 0 24 24"><path d="M3 17.25V21h3.75L17.81 9.94l-3.75-3.75L3 17.25zM20.71 7.04c.39-.39.39-1.02 0-1.41l-2.34-2.34a.9959.9959 0 0 0-1.41 0l-1.83 1.83 3.75 3.75 1.83-1.83z" fill="#666"/></svg>
<svg class="b" style="left:711.3px;top:111.6px;overflow:visible;" width="17" height="17" viewBox="0 0 24 24"><path d="M16.59 8.59 12 13.17 7.41 8.59 6 10l6 6 6-6z" fill="#666"/></svg>
<div class="b" style="left:741px;top:107px;width:59px;height:28px;background:#326690;border-radius:6px"></div>
<svg class="b" style="left:750.6px;top:110.7px;overflow:visible;" width="20" height="20" viewBox="0 0 24 24"><path d="M4.25 5.61C6.27 8.2 10 13 10 13v6c0 .55.45 1 1 1h2c.55 0 1-.45 1-1v-6s3.72-4.8 5.74-7.39c.51-.66.04-1.61-.79-1.61H5.04c-.83 0-1.3.95-.79 1.61z" fill="#fff"/></svg>
<svg class="b" style="left:779px;top:111px;overflow:visible;" width="19" height="19" viewBox="0 0 24 24"><path d="M16.59 8.59 12 13.17 7.41 8.59 6 10l6 6 6-6z" fill="#fff"/></svg>
<div class="b" style="left:805px;top:105.5px;width:109px;height:30px;background:#fff;border:1px solid #dde0e6;border-radius:6px"></div>
<div class="t" style="left:816px;top:112.41px;font-size:14.58px;line-height:16.29px;color:#222;font-weight:400;font-family:'Liberation Sans', sans-serif;">No limit</div>
<svg class="b" style="left:884px;top:108px;overflow:visible;" width="24" height="24" viewBox="0 0 24 24"><path d="M7 10l5 5 5-5z" fill="#222"/></svg>
<div class="b" style="left:920px;top:107px;width:118px;height:27.5px;background:#f6f7f9;border:1px solid #c9cfd8;border-radius:5px"></div>
<div class="b" style="left:952px;top:108px;width:33px;height:25.5px;background:#fff;border-radius:0 0 0 0"></div>
<div class="b" style="left:952px;top:107px;width:1px;height:27.5px;background:#c9cfd8"></div>
<div class="b" style="left:985px;top:107px;width:1px;height:27.5px;background:#c9cfd8"></div>
<div class="b" style="left:1018px;top:107px;width:1px;height:27.5px;background:#c9cfd8"></div>
<div class="b" style="left:930px;top:114px;width:12px;height:12px;background:#666;border-radius:2px"></div>
<svg class="b" style="left:958px;top:110px;overflow:visible;" width="22" height="22" viewBox="0 0 24 24"><path d="M8 5v14l11-7z" fill="#222"/></svg>
<svg class="b" style="left:996.3px;top:113.6px;overflow:visible;" width="12.4" height="13.6" viewBox="0 0 12.4 13.6"><path d="M0.8 0.8V12.8L11.8 6.8z" fill="#6f6f6f" stroke="#6f6f6f" stroke-width="1" stroke-linejoin="round"/><path d="M2.6 8.2L4.6 7.4V13.6H3.4V9z" fill="#fff"/></svg>
<svg class="b" style="left:1019px;top:111px;overflow:visible;" width="18" height="18" viewBox="0 0 24 24"><path d="M16.59 8.59 12 13.17 7.41 8.59 6 10l6 6 6-6z" fill="#666"/></svg>
<div class="b" style="left:1042px;top:107px;width:86px;height:27.5px;background:#f6f7f9;border:1px solid #c9cfd8;border-radius:5px"></div>
<div class="b" style="left:1075px;top:107px;width:1px;height:27.5px;background:#c9cfd8"></div>
<div class="b" style="left:1108px;top:107px;width:1px;height:27.5px;background:#c9cfd8"></div>
<div class="b" style="left:1052px;top:113.5px;width:14px;height:14px;background:#6b6b6b;border-radius:2px"></div>
<div class="t" style="left:1055.3px;top:116.60px;font-size:10.5px;line-height:11.73px;color:#fff;font-weight:700;font-family:'Liberation Sans', sans-serif;">E</div>
<svg class="b" style="left:1085px;top:113.5px;overflow:visible;" width="14" height="14" viewBox="0 0 14 14"><rect width="14" height="14" rx="2" fill="#6b6b6b"/><path d="M3.5 6.5v5M7 3.5v8M10.5 8.5v3" stroke="#fff" stroke-width="1.8"/></svg>
<svg class="b" style="left:1109px;top:111px;overflow:visible;" width="18" height="18" viewBox="0 0 24 24"><path d="M16.59 8.59 12 13.17 7.41 8.59 6 10l6 6 6-6z" fill="#666"/></svg>
<div class="b" style="left:1132px;top:107px;width:67px;height:27.5px;background:#f6f7f9;border:1px solid #c9cfd8;border-radius:5px"></div>
<div class="b" style="left:1165px;top:107px;width:1px;height:27.5px;background:#c9cfd8"></div>
<svg class="b" style="left:1140px;top:112px;overflow:visible;" width="18" height="18" viewBox="0 0 18 18"><ellipse cx="8" cy="3.6" rx="6.5" ry="2.6" fill="#666"/><path d="M1.5 5.6v2.6c0 1.4 2.9 2.6 6.5 2.6.3 0 .6 0 .9 0A4.5 4.5 0 0 1 12 7.9c.9-.4 2-1.2 2-1.8V5.6c0 1.4-2.9 2.6-6.5 2.6S1.5 7 1.5 5.6z" fill="#666"/><path d="M1.5 10.3v2.4c0 1.4 2.9 2.6 6.5 2.6h.4A4.5 4.5 0 0 1 8.2 12.9h-.2c-3.6 0-6.5-1.2-6.5-2.6z" fill="#666"/><circle cx="13" cy="12.5" r="4.5" fill="#666"/><path d="M10.8 12.6l1.6 1.6 3-3.1" stroke="#fff" stroke-width="1.3" fill="none"/></svg>
<svg class="b" style="left:1173px;top:112px;overflow:visible;" width="18" height="18" viewBox="0 0 18 18"><ellipse cx="8" cy="3.6" rx="6.5" ry="2.6" fill="#666"/><path d="M1.5 5.6v2.6c0 1.4 2.9 2.6 6.5 2.6.3 0 .6 0 .9 0A4.5 4.5 0 0 1 12 7.9c.9-.4 2-1.2 2-1.8V5.6c0 1.4-2.9 2.6-6.5 2.6S1.5 7 1.5 5.6z" fill="#666"/><path d="M1.5 10.3v2.4c0 1.4 2.9 2.6 6.5 2.6h.4A4.5 4.5 0 0 1 8.2 12.9h-.2c-3.6 0-6.5-1.2-6.5-2.6z" fill="#666"/><circle cx="13" cy="12.5" r="4.5" fill="#666"/><path d="M11 12.5a2.3 2.3 0 1 1 2.3 2.3" stroke="#fff" stroke-width="1.2" fill="none"/><path d="M9.8 11.5l1.3 2 1.6-1.8z" fill="#fff"/></svg>
<div class="b" style="left:1203px;top:107px;width:48px;height:27.5px;background:#f6f7f9;border:1px solid #c9cfd8;border-radius:5px"></div>
<svg class="b" style="left:1210px;top:110.8px;overflow:visible;" width="19" height="19" viewBox="0 0 24 24"><path d="M2 17h2v.5H3v1h1v.5H2v1h3v-4H2v1zm1-9h1V4H2v1h1v3zm-1 3h1.8L2 13.1v.9h3v-1H3.2L5 10.9V10H2v1zm5-6v2h14V5H7zm0 14h14v-2H7v2zm0-6h14v-2H7v2z" fill="#666"/></svg>
<svg class="b" style="left:1225.5px;top:111.5px;overflow:visible;" width="17" height="17" viewBox="0 0 24 24"><path d="M16.59 8.59 12 13.17 7.41 8.59 6 10l6 6 6-6z" fill="#666"/></svg>
<div class="b" style="left:1255px;top:107px;width:34px;height:27.5px;background:#fff;border:1px solid #c9cfd8;border-radius:5px"></div>
<svg class="b" style="left:1262px;top:110.6px;overflow:visible;" width="20" height="20" viewBox="0 0 24 24"><path d="M12 2C6.48 2 2 6.48 2 12s4.48 10 10 10 10-4.48 10-10S17.52 2 12 2zm1 17h-2v-2h2v2zm2.07-7.75-.9.92C13.45 12.9 13 13.5 13 15h-2v-.5c0-1.1.45-2.1 1.17-2.83l1.24-1.26c.37-.36.59-.86.59-1.41 0-1.1-.9-2-2-2s-2 .9-2 2H8c0-2.21 1.79-4 4-4s4 1.79 4 4c0 .88-.36 1.68-.93 2.25z" fill="#111"/></svg>
<div class="t" style="left:603px;top:147.20px;font-size:13.7px;line-height:15.30px;color:#326690;font-weight:400;font-family:'Liberation Sans', sans-serif;">Query</div>
<div class="t" style="left:656.5px;top:147.01px;font-size:13.91px;line-height:15.54px;color:#333;font-weight:400;font-family:'Liberation Sans', sans-serif;">Query History</div>
<div class="b" style="left:595px;top:168px;width:53px;height:2px;background:#326690"></div>
<div class="b" style="left:595px;top:170px;width:1107px;height:1px;background:#dde0e6"></div>
<svg class="b" style="left:1670.5px;top:146.5px;overflow:visible;" width="17" height="17" viewBox="0 0 24 24"><path d="M21 11V3h-8l3.29 3.29-10 10L3 13v8h8l-3.29-3.29 10-10z" fill="#222"/></svg>
<div class="b" style="left:1701px;top:140px;width:1px;height:126px;background:#dde0e6"></div>
<div class="t" style="left:1710px;top:146.98px;font-size:13.95px;line-height:15.58px;color:#326690;font-weight:400;font-family:'Liberation Sans', sans-serif;">Scratch Pad</div>
<svg class="b" style="left:1792px;top:147px;overflow:visible;" width="16" height="16" viewBox="0 0 24 24"><path d="M19 6.41 17.59 5 12 10.59 6.41 5 5 6.41 10.59 12 5 17.59 6.41 19 12 13.41 17.59 19 19 17.59 13.41 12z" fill="#222"/></svg>
<div class="b" style="left:1702px;top:168px;width:109px;height:2px;background:#326690"></div>
<div class="b" style="left:1702px;top:170px;width:199px;height:1px;background:#dde0e6"></div>
<svg class="b" style="left:1872.5px;top:146.5px;overflow:visible;" width="17" height="17" viewBox="0 0 24 24"><path d="M21 11V3h-8l3.29 3.29-10 10L3 13v8h8l-3.29-3.29 10-10z" fill="#222"/></svg>
<div class="b" style="left:595px;top:171px;width:39px;height:95px;background:#f3f4f6"></div>
<div class="t" style="left:603.8px;top:178.93px;font-size:14px;line-height:15.64px;color:#7d8694;font-weight:400;font-family:'Liberation Mono', monospace;">1</div>
<div class="t" style="left:603.8px;top:198.93px;font-size:14px;line-height:15.64px;color:#7d8694;font-weight:400;font-family:'Liberation Mono', monospace;">2</div>
<svg class="b" style="left:620.3px;top:182.6px;overflow:visible;" width="8.5" height="5.8" viewBox="0 0 8.5 5.8"><path d="M0.9 0.9L4.25 4.5L7.6 0.9" fill="none" stroke="#222" stroke-width="1.7"/></svg>
<div class="t" style="left:639.8px;top:178.11px;font-size:14.35px;line-height:16.03px;color:#222;font-weight:400;font-family:'Liberation Mono', monospace;"><b style="color:#990088">SELECT</b> * <b style="color:#990088">FROM</b> public."Transactions"</div>
<div class="t" style="left:639.8px;top:198.11px;font-size:14.35px;line-height:16.03px;color:#222;font-weight:400;font-family:'Liberation Mono', monospace;"><b style="color:#990088">ORDER BY</b> rowindex <b style="color:#990088">ASC</b></div>
<div class="b" style="left:595px;top:266px;width:1306px;height:1px;background:#dde0e6"></div>
<div class="t" style="left:603.3px;top:273.81px;font-size:13.91px;line-height:15.54px;color:#326690;font-weight:400;font-family:'Liberation Sans', sans-serif;">Data Output</div>
<div class="t" style="left:696px;top:273.69px;font-size:14.04px;line-height:15.68px;color:#333;font-weight:400;font-family:'Liberation Sans', sans-serif;">Messages</div>
<div class="t" style="left:777px;top:273.82px;font-size:13.9px;line-height:15.53px;color:#333;font-weight:400;font-family:'Liberation Sans', sans-serif;letter-spacing:0.45px">Notifications</div>
<div class="b" style="left:595px;top:295px;width:92px;height:2px;background:#326690"></div>
<svg class="b" style="left:1872.5px;top:273px;overflow:visible;" width="17" height="17" viewBox="0 0 24 24"><path d="M21 11V3h-8l3.29 3.29-10 10L3 13v8h8l-3.29-3.29 10-10z" fill="#222"/></svg>
<div class="b" style="left:595px;top:297px;width:1306px;height:1px;background:#dde0e6"></div>
<div class="b" style="left:595px;top:298px;width:1306px;height:32px;background:#ebeef3"></div>
<div class="b" style="left:597px;top:300px;width:171px;height:28px;background:#f6f7f9;border:1px solid #c9cfd8;border-radius:5px"></div>
<div class="b" style="left:598px;top:301px;width:32px;height:26px;background:#fff;border-radius:5px 0 0 5px"></div>
<div class="b" style="left:663px;top:301px;width:19px;height:26px;background:#fff;border-radius:0 0 0 0"></div>
<div class="b" style="left:682px;top:301px;width:33px;height:26px;background:#fff;border-radius:0 0 0 0"></div>
<div class="b" style="left:715px;top:301px;width:19px;height:26px;background:#fff;border-radius:0 0 0 0"></div>
<div class="b" style="left:630px;top:300px;width:1px;height:28px;background:#c9cfd8"></div>
<div class="b" style="left:663px;top:300px;width:1px;height:28px;background:#c9cfd8"></div>
<div class="b" style="left:682px;top:300px;width:1px;height:28px;background:#c9cfd8"></div>
<div class="b" style="left:715px;top:300px;width:1px;height:28px;background:#c9cfd8"></div>
<div class="b" style="left:734px;top:300px;width:1px;height:28px;background:#c9cfd8"></div>
<svg class="b" style="left:600.9px;top:301.9px;overflow:visible;" width="24.5" height="24.5" viewBox="0 0 24 24"><path d="M14 10H3v2h11v-2zm0-4H3v2h11V6zm4 8v-4h-2v4h-4v2h4v4h2v-4h4v-2h-4zM3 16h7v-2H3v2z" fill="#222"/></svg>
<svg class="b" style="left:638px;top:304px;overflow:visible;" width="17" height="19" viewBox="0 0 17 19"><path d="M1 15V2.5C1 1.7 1.7 1 2.5 1H11" stroke="#777" stroke-width="1.6" fill="none"/><path d="M5 4.5h6.5l4.5 4.5v8.5c0 .8-.7 1.5-1.5 1.5h-9.5c-.8 0-1.5-.7-1.5-1.5z" fill="#777"/><path d="M11 4.5v4.8h5z" fill="#fff"/></svg>
<svg class="b" style="left:664px;top:305px;overflow:visible;" width="17" height="17" viewBox="0 0 24 24"><path d="M16.59 8.59 12 13.17 7.41 8.59 6 10l6 6 6-6z" fill="#333"/></svg>
<svg class="b" style="left:691px;top:303px;overflow:visible;" width="16" height="19" viewBox="0 0 16 19"><rect x="1" y="3" width="14" height="15" rx="1.2" fill="none" stroke="#222" stroke-width="1.6"/><path d="M4.5 2.5h7v3h-7z" fill="#222"/><circle cx="8" cy="2" r="1.6" fill="#222"/></svg>
<svg class="b" style="left:716px;top:305px;overflow:visible;" width="17" height="17" viewBox="0 0 24 24"><path d="M16.59 8.59 12 13.17 7.41 8.59 6 10l6 6 6-6z" fill="#333"/></svg>
<svg class="b" style="left:740.7px;top:303.4px;overflow:visible;" width="20.5" height="20.5" viewBox="0 0 24 24"><path d="M6 19c0 1.1.9 2 2 2h8c1.1 0 2-.9 2-2V7H6v12zM19 4h-3.5l-1-1h-5l-1 1H5v2h14V4z" fill="#777"/></svg>
<div class="b" style="left:772px;top:300px;width:34px;height:28px;background:#f6f7f9;border:1px solid #c9cfd8;border-radius:5px"></div>
<svg class="b" style="left:780px;top:305px;overflow:visible;" width="17" height="19" viewBox="0 0 17 19"><ellipse cx="7.5" cy="3.3" rx="6.5" ry="2.5" fill="#777"/><path d="M1 5.3v2.9c0 1.4 2.9 2.5 6.5 2.5s6.5-1.1 6.5-2.5V5.3c0 1.4-2.9 2.5-6.5 2.5S1 6.7 1 5.3z" fill="#777"/><path d="M1 10.3v2.9c0 1.4 2.9 2.5 6.5 2.5h1V12.6h-1C3.9 12.6 1 11.7 1 10.3z" fill="#777"/><rect x="9.5" y="10.5" width="7" height="7.5" rx="1" fill="#777"/><rect x="11.3" y="14.2" width="3.4" height="2.4" fill="#fff"/></svg>
<div class="b" style="left:810px;top:300px;width:34px;height:28px;background:#fff;border:1px solid #c9cfd8;border-radius:5px"></div>
<svg class="b" style="left:817.1px;top:303.5px;overflow:visible;" width="20" height="20" viewBox="0 0 24 24"><path d="M19 9h-4V3H9v6H5l7 7 7-7zM5 18v2h14v-2H5z" fill="#222"/></svg>
<div class="b" style="left:848px;top:300px;width:34px;height:28px;background:#fff;border:1px solid #c9cfd8;border-radius:5px"></div>
<svg class="b" style="left:854px;top:306px;overflow:visible;" width="22" height="16" viewBox="0 0 22 16"><path d="M3.7 11.5L9.4 5.2L13.2 9.8L18.3 4.3" fill="none" stroke="#222" stroke-width="1.6"/><circle cx="3.7" cy="11.5" r="1.55" fill="#222"/><circle cx="9.4" cy="5.2" r="1.55" fill="#222"/><circle cx="13.2" cy="9.8" r="1.55" fill="#222"/><circle cx="18.3" cy="4.3" r="1.55" fill="#222"/></svg>
<div class="b" style="left:595px;top:330px;width:1291px;height:421px;background:#fff"></div>
<div class="b" style="left:595px;top:330px;width:1306px;height:1px;background:#dde0e6"></div>
<div class="b" style="left:595px;top:370px;width:1291px;height:1px;background:#dde0e6"></div>
<div class="b" style="left:595px;top:395px;width:1291px;height:1px;background:#dde0e6"></div>
<div class="b" style="left:595px;top:420px;width:1291px;height:1px;background:#dde0e6"></div>
<div class="b" style="left:595px;top:445px;width:1291px;height:1px;background:#dde0e6"></div>
<div class="b" style="left:595px;top:470px;width:1291px;height:1px;background:#dde0e6"></div>
<div class="b" style="left:595px;top:495px;width:1291px;height:1px;background:#dde0e6"></div>
<div class="b" style="left:595px;top:520px;width:1291px;height:1px;background:#dde0e6"></div>
<div class="b" style="left:595px;top:545px;width:1291px;height:1px;background:#dde0e6"></div>
<div class="b" style="left:595px;top:570px;width:1291px;height:1px;background:#dde0e6"></div>
<div class="b" style="left:595px;top:595px;width:1291px;height:1px;background:#dde0e6"></div>
<div class="b" style="left:595px;top:620px;width:1291px;height:1px;background:#dde0e6"></div>
<div class="b" style="left:595px;top:645px;width:1291px;height:1px;background:#dde0e6"></div>
<div class="b" style="left:595px;top:670px;width:1291px;height:1px;background:#dde0e6"></div>
<div class="b" style="left:595px;top:695px;width:1291px;height:1px;background:#dde0e6"></div>
<div class="b" style="left:595px;top:720px;width:1291px;height:1px;background:#dde0e6"></div>
<div class="b" style="left:595px;top:745px;width:1291px;height:1px;background:#dde0e6"></div>
<div class="b" style="left:644px;top:330px;width:1px;height:421px;background:#dde0e6"></div>
<div class="b" style="left:740px;top:330px;width:1px;height:421px;background:#dde0e6"></div>
<div class="b" style="left:938px;top:330px;width:1px;height:421px;background:#dde0e6"></div>
<div class="b" style="left:1136px;top:330px;width:1px;height:421px;background:#dde0e6"></div>
<div class="b" style="left:1599px;top:330px;width:1px;height:421px;background:#dde0e6"></div>
<div class="b" style="left:1704px;top:330px;width:1px;height:421px;background:#dde0e6"></div>
<div class="b" style="left:645px;top:330px;width:7px;height:421px;background:linear-gradient(to right,rgba(0,0,0,0.045),rgba(0,0,0,0))"></div>
<div class="b" style="left:1886px;top:330px;width:15px;height:421px;background:#f3f4f6"></div>
<div class="b" style="left:1890px;top:335px;width:8px;height:9px;background:#c8ccd4;border-radius:4px"></div>
<div class="t" style="left:651.1px;top:336.57px;font-size:11.3px;line-height:12.62px;color:#222;font-weight:700;font-family:'Liberation Sans', sans-serif;">rowindex</div>
<div class="t" style="left:651.1px;top:352.77px;font-size:12.3px;line-height:13.74px;color:#222;font-weight:400;font-family:'Liberation Sans', sans-serif;">[PK] integer</div>
<svg class="b" style="left:720.5px;top:344.5px;overflow:visible;" width="13" height="13" viewBox="0 0 24 24"><path d="M3 17.25V21h3.75L17.81 9.94l-3.75-3.75L3 17.25zM20.71 7.04c.39-.39.39-1.02 0-1.41l-2.34-2.34a.9959.9959 0 0 0-1.41 0l-1.83 1.83 3.75 3.75 1.83-1.83z" fill="#222"/></svg>
<div class="t" style="left:747px;top:336.57px;font-size:11.3px;line-height:12.62px;color:#222;font-weight:700;font-family:'Liberation Sans', sans-serif;">rowcreated</div>
<div class="t" style="left:747px;top:352.77px;font-size:12.3px;line-height:13.74px;color:#222;font-weight:400;font-family:'Liberation Sans', sans-serif;">timestamp with time zone</div>
<svg class="b" style="left:918.5px;top:344.5px;overflow:visible;" width="13" height="13" viewBox="0 0 24 24"><path d="M3 17.25V21h3.75L17.81 9.94l-3.75-3.75L3 17.25zM20.71 7.04c.39-.39.39-1.02 0-1.41l-2.34-2.34a.9959.9959 0 0 0-1.41 0l-1.83 1.83 3.75 3.75 1.83-1.83z" fill="#222"/></svg>
<div class="t" style="left:945.2px;top:336.57px;font-size:11.3px;line-height:12.62px;color:#222;font-weight:700;font-family:'Liberation Sans', sans-serif;">rowupdated</div>
<div class="t" style="left:945.2px;top:352.77px;font-size:12.3px;line-height:13.74px;color:#222;font-weight:400;font-family:'Liberation Sans', sans-serif;">timestamp with time zone</div>
<svg class="b" style="left:1116.0px;top:344.5px;overflow:visible;" width="13" height="13" viewBox="0 0 24 24"><path d="M3 17.25V21h3.75L17.81 9.94l-3.75-3.75L3 17.25zM20.71 7.04c.39-.39.39-1.02 0-1.41l-2.34-2.34a.9959.9959 0 0 0-1.41 0l-1.83 1.83 3.75 3.75 1.83-1.83z" fill="#222"/></svg>
<div class="t" style="left:1143px;top:336.57px;font-size:11.3px;line-height:12.62px;color:#222;font-weight:700;font-family:'Liberation Sans', sans-serif;">blockhash</div>
<div class="t" style="left:1143px;top:352.77px;font-size:12.3px;line-height:13.74px;color:#222;font-weight:400;font-family:'Liberation Sans', sans-serif;">character varying (67)</div>
<svg class="b" style="left:1579.0px;top:344.5px;overflow:visible;" width="13" height="13" viewBox="0 0 24 24"><path d="M3 17.25V21h3.75L17.81 9.94l-3.75-3.75L3 17.25zM20.71 7.04c.39-.39.39-1.02 0-1.41l-2.34-2.34a.9959.9959 0 0 0-1.41 0l-1.83 1.83 3.75 3.75 1.83-1.83z" fill="#222"/></svg>
<div class="t" style="left:1606.3px;top:336.57px;font-size:11.3px;line-height:12.62px;color:#222;font-weight:700;font-family:'Liberation Sans', sans-serif;">blocknumber</div>
<div class="t" style="left:1606.3px;top:352.77px;font-size:12.3px;line-height:13.74px;color:#222;font-weight:400;font-family:'Liberation Sans', sans-serif;">bigint</div>
<svg class="b" style="left:1684.5px;top:344.5px;overflow:visible;" width="13" height="13" viewBox="0 0 24 24"><path d="M3 17.25V21h3.75L17.81 9.94l-3.75-3.75L3 17.25zM20.71 7.04c.39-.39.39-1.02 0-1.41l-2.34-2.34a.9959.9959 0 0 0-1.41 0l-1.83 1.83 3.75 3.75 1.83-1.83z" fill="#222"/></svg>
<div class="t" style="left:1711.2px;top:336.57px;font-size:11.3px;line-height:12.62px;color:#222;font-weight:700;font-family:'Liberation Sans', sans-serif;">hash</div>
<div class="t" style="left:1711.2px;top:352.77px;font-size:12.3px;line-height:13.74px;color:#222;font-weight:400;font-family:'Liberation Sans', sans-serif;">character varying (67)</div>
<div class="t" style="left:603.8px;top:376.67px;font-size:12.08px;line-height:13.49px;color:#333;font-weight:400;font-family:'Liberation Sans', sans-serif;">1</div>
<div class="t" style="left:645px;width:87.3px;text-align:right;top:376.67px;font-size:12.08px;line-height:13.49px;color:#222">1</div>
<div class="t" style="left:749.4px;top:376.67px;font-size:12.08px;line-height:13.49px;color:#222;font-weight:400;font-family:'Liberation Sans', sans-serif;">2026-03-05 15:09:28.042486+00</div>
<div class="t" style="left:947.6px;top:376.67px;font-size:12.08px;line-height:13.49px;color:#222;font-weight:400;font-family:'Liberation Sans', sans-serif;">2026-03-05 15:09:28.042486+00</div>
<div class="t" style="left:1145.3px;top:377.35px;font-size:12.43px;line-height:13.88px;color:#222;font-weight:400;font-family:'Liberation Sans', sans-serif;">0x9efbd38e628ed7b19fb7408c532317a455e7cbc5df509ba6e3eccdb3f553966e</div>
<div class="t" style="left:1600px;width:94.5px;text-align:right;top:376.67px;font-size:12.08px;line-height:13.49px;color:#222">1</div>
<div class="t" style="left:603.8px;top:401.67px;font-size:12.08px;line-height:13.49px;color:#333;font-weight:400;font-family:'Liberation Sans', sans-serif;">2</div>
<div class="t" style="left:645px;width:87.3px;text-align:right;top:401.67px;font-size:12.08px;line-height:13.49px;color:#222">2</div>
<div class="t" style="left:749.4px;top:401.67px;font-size:12.08px;line-height:13.49px;color:#222;font-weight:400;font-family:'Liberation Sans', sans-serif;">2026-03-05 15:09:28.323611+00</div>
<div class="t" style="left:947.6px;top:401.67px;font-size:12.08px;line-height:13.49px;color:#222;font-weight:400;font-family:'Liberation Sans', sans-serif;">2026-03-05 15:09:28.323611+00</div>
<div class="t" style="left:1145.3px;top:402.35px;font-size:12.43px;line-height:13.88px;color:#222;font-weight:400;font-family:'Liberation Sans', sans-serif;">0x9b2617674b40dff896dca7b6e0a02cd0392232b7134d290130c7919ee944f009</div>
<div class="t" style="left:1600px;width:94.5px;text-align:right;top:401.67px;font-size:12.08px;line-height:13.49px;color:#222">2</div>
<div class="t" style="left:603.8px;top:426.67px;font-size:12.08px;line-height:13.49px;color:#333;font-weight:400;font-family:'Liberation Sans', sans-serif;">3</div>
<div class="t" style="left:645px;width:87.3px;text-align:right;top:426.67px;font-size:12.08px;line-height:13.49px;color:#222">3</div>
<div class="t" style="left:749.4px;top:426.67px;font-size:12.08px;line-height:13.49px;color:#222;font-weight:400;font-family:'Liberation Sans', sans-serif;">2026-03-05 15:09:28.448401+00</div>
<div class="t" style="left:947.6px;top:426.67px;font-size:12.08px;line-height:13.49px;color:#222;font-weight:400;font-family:'Liberation Sans', sans-serif;">2026-03-05 15:09:28.448401+00</div>
<div class="t" style="left:1145.3px;top:427.35px;font-size:12.43px;line-height:13.88px;color:#222;font-weight:400;font-family:'Liberation Sans', sans-serif;">0x4b61ca9dea60c78a87630cd6f11e86d74bd3971dbca3fa190b6698f84c94f039</div>
<div class="t" style="left:1600px;width:94.5px;text-align:right;top:426.67px;font-size:12.08px;line-height:13.49px;color:#222">3</div>
<div class="t" style="left:603.8px;top:451.67px;font-size:12.08px;line-height:13.49px;color:#333;font-weight:400;font-family:'Liberation Sans', sans-serif;">4</div>
<div class="t" style="left:645px;width:87.3px;text-align:right;top:451.67px;font-size:12.08px;line-height:13.49px;color:#222">4</div>
<div class="t" style="left:749.4px;top:451.67px;font-size:12.08px;line-height:13.49px;color:#222;font-weight:400;font-family:'Liberation Sans', sans-serif;">2026-03-05 15:09:28.60332+00</div>
<div class="t" style="left:947.6px;top:451.67px;font-size:12.08px;line-height:13.49px;color:#222;font-weight:400;font-family:'Liberation Sans', sans-serif;">2026-03-05 15:09:28.60332+00</div>
<div class="t" style="left:1145.3px;top:452.35px;font-size:12.43px;line-height:13.88px;color:#222;font-weight:400;font-family:'Liberation Sans', sans-serif;">0x49933f4dfcfab26e6287b91b7bb673ff9ed58e622eb4467f8dc2ec1b77fc3dc7</div>
<div class="t" style="left:1600px;width:94.5px;text-align:right;top:451.67px;font-size:12.08px;line-height:13.49px;color:#222">4</div>
<div class="t" style="left:603.8px;top:476.67px;font-size:12.08px;line-height:13.49px;color:#333;font-weight:400;font-family:'Liberation Sans', sans-serif;">5</div>
<div class="t" style="left:645px;width:87.3px;text-align:right;top:476.67px;font-size:12.08px;line-height:13.49px;color:#222">5</div>
<div class="t" style="left:749.4px;top:476.67px;font-size:12.08px;line-height:13.49px;color:#222;font-weight:400;font-family:'Liberation Sans', sans-serif;">2026-03-05 15:09:28.883718+00</div>
<div class="t" style="left:947.6px;top:476.67px;font-size:12.08px;line-height:13.49px;color:#222;font-weight:400;font-family:'Liberation Sans', sans-serif;">2026-03-05 15:09:28.883718+00</div>
<div class="t" style="left:1145.3px;top:477.35px;font-size:12.43px;line-height:13.88px;color:#222;font-weight:400;font-family:'Liberation Sans', sans-serif;">0xb2fe215e9372ad0de4e04a8bc08a957da2853228a1d1f2d8a012509c640bc1d2</div>
<div class="t" style="left:1600px;width:94.5px;text-align:right;top:476.67px;font-size:12.08px;line-height:13.49px;color:#222">5</div>
<div class="t" style="left:603.8px;top:501.67px;font-size:12.08px;line-height:13.49px;color:#333;font-weight:400;font-family:'Liberation Sans', sans-serif;">6</div>
<div class="t" style="left:645px;width:87.3px;text-align:right;top:501.67px;font-size:12.08px;line-height:13.49px;color:#222">6</div>
<div class="t" style="left:749.4px;top:501.67px;font-size:12.08px;line-height:13.49px;color:#222;font-weight:400;font-family:'Liberation Sans', sans-serif;">2026-03-05 15:09:29.026079+00</div>
<div class="t" style="left:947.6px;top:501.67px;font-size:12.08px;line-height:13.49px;color:#222;font-weight:400;font-family:'Liberation Sans', sans-serif;">2026-03-05 15:09:29.026079+00</div>
<div class="t" style="left:1145.3px;top:502.35px;font-size:12.43px;line-height:13.88px;color:#222;font-weight:400;font-family:'Liberation Sans', sans-serif;">0x47eda92a8dfa1076cf8af93fa1167d52ab61446f1f2b863729c440d204437948</div>
<div class="t" style="left:1600px;width:94.5px;text-align:right;top:501.67px;font-size:12.08px;line-height:13.49px;color:#222">6</div>
<div class="t" style="left:603.8px;top:526.67px;font-size:12.08px;line-height:13.49px;color:#333;font-weight:400;font-family:'Liberation Sans', sans-serif;">7</div>
<div class="t" style="left:645px;width:87.3px;text-align:right;top:526.67px;font-size:12.08px;line-height:13.49px;color:#222">7</div>
<div class="t" style="left:749.4px;top:526.67px;font-size:12.08px;line-height:13.49px;color:#222;font-weight:400;font-family:'Liberation Sans', sans-serif;">2026-03-05 15:09:29.182967+00</div>
<div class="t" style="left:947.6px;top:526.67px;font-size:12.08px;line-height:13.49px;color:#222;font-weight:400;font-family:'Liberation Sans', sans-serif;">2026-03-05 15:09:29.182967+00</div>
<div class="t" style="left:1145.3px;top:527.35px;font-size:12.43px;line-height:13.88px;color:#222;font-weight:400;font-family:'Liberation Sans', sans-serif;">0xb0842f99fe294f03ea3c22338473adc566aa23c522da3d4689035062e9a2dcc0</div>
<div class="t" style="left:1600px;width:94.5px;text-align:right;top:526.67px;font-size:12.08px;line-height:13.49px;color:#222">7</div>
<div class="t" style="left:603.8px;top:551.67px;font-size:12.08px;line-height:13.49px;color:#333;font-weight:400;font-family:'Liberation Sans', sans-serif;">8</div>
<div class="t" style="left:645px;width:87.3px;text-align:right;top:551.67px;font-size:12.08px;line-height:13.49px;color:#222">8</div>
<div class="t" style="left:749.4px;top:551.67px;font-size:12.08px;line-height:13.49px;color:#222;font-weight:400;font-family:'Liberation Sans', sans-serif;">2026-03-05 15:09:29.440342+00</div>
<div class="t" style="left:947.6px;top:551.67px;font-size:12.08px;line-height:13.49px;color:#222;font-weight:400;font-family:'Liberation Sans', sans-serif;">2026-03-05 15:09:29.440342+00</div>
<div class="t" style="left:1145.3px;top:552.35px;font-size:12.43px;line-height:13.88px;color:#222;font-weight:400;font-family:'Liberation Sans', sans-serif;">0xf2226ad5a512fd10858b4520e687c6f587724ab4b087d9d1787d4c1e03668c14</div>
<div class="t" style="left:1600px;width:94.5px;text-align:right;top:551.67px;font-size:12.08px;line-height:13.49px;color:#222">8</div>
<div class="t" style="left:603.8px;top:576.67px;font-size:12.08px;line-height:13.49px;color:#333;font-weight:400;font-family:'Liberation Sans', sans-serif;">9</div>
<div class="t" style="left:645px;width:87.3px;text-align:right;top:576.67px;font-size:12.08px;line-height:13.49px;color:#222">9</div>
<div class="t" style="left:749.4px;top:576.67px;font-size:12.08px;line-height:13.49px;color:#222;font-weight:400;font-family:'Liberation Sans', sans-serif;">2026-03-05 15:09:29.653828+00</div>
<div class="t" style="left:947.6px;top:576.67px;font-size:12.08px;line-height:13.49px;color:#222;font-weight:400;font-family:'Liberation Sans', sans-serif;">2026-03-05 15:09:29.653828+00</div>
<div class="t" style="left:1145.3px;top:577.35px;font-size:12.43px;line-height:13.88px;color:#222;font-weight:400;font-family:'Liberation Sans', sans-serif;">0x0724e09322efa1dcdb998a6f0536586a31a0acedfc643971eab756d4875999e9</div>
<div class="t" style="left:1600px;width:94.5px;text-align:right;top:576.67px;font-size:12.08px;line-height:13.49px;color:#222">9</div>
<div class="t" style="left:603.8px;top:601.67px;font-size:12.08px;line-height:13.49px;color:#333;font-weight:400;font-family:'Liberation Sans', sans-serif;">10</div>
<div class="t" style="left:645px;width:87.3px;text-align:right;top:601.67px;font-size:12.08px;line-height:13.49px;color:#222">10</div>
<div class="t" style="left:749.4px;top:601.67px;font-size:12.08px;line-height:13.49px;color:#222;font-weight:400;font-family:'Liberation Sans', sans-serif;">2026-03-05 15:09:29.903193+00</div>
<div class="t" style="left:947.6px;top:601.67px;font-size:12.08px;line-height:13.49px;color:#222;font-weight:400;font-family:'Liberation Sans', sans-serif;">2026-03-05 15:09:29.903193+00</div>
<div class="t" style="left:1145.3px;top:602.35px;font-size:12.43px;line-height:13.88px;color:#222;font-weight:400;font-family:'Liberation Sans', sans-serif;">0x7f59335cc2e8cc47daddaa17668b1e48b9add2f80ece4e90cf184927b24175da</div>
<div class="t" style="left:1600px;width:94.5px;text-align:right;top:601.67px;font-size:12.08px;line-height:13.49px;color:#222">10</div>
<div class="t" style="left:603.8px;top:626.67px;font-size:12.08px;line-height:13.49px;color:#333;font-weight:400;font-family:'Liberation Sans', sans-serif;">11</div>
<div class="t" style="left:645px;width:87.3px;text-align:right;top:626.67px;font-size:12.08px;line-height:13.49px;color:#222">11</div>
<div class="t" style="left:749.4px;top:626.67px;font-size:12.08px;line-height:13.49px;color:#222;font-weight:400;font-family:'Liberation Sans', sans-serif;">2026-03-05 15:09:30.067016+00</div>
<div class="t" style="left:947.6px;top:626.67px;font-size:12.08px;line-height:13.49px;color:#222;font-weight:400;font-family:'Liberation Sans', sans-serif;">2026-03-05 15:09:30.067016+00</div>
<div class="t" style="left:1145.3px;top:627.53px;font-size:12.23px;line-height:13.66px;color:#222;font-weight:400;font-family:'Liberation Sans', sans-serif;">0x5b670bc8dd748ce1b95fc8c28ada76ee2c5e5b4b51b418b892e6237a8d0b71…</div>
<div class="t" style="left:1600px;width:94.5px;text-align:right;top:626.67px;font-size:12.08px;line-height:13.49px;color:#222">11</div>
<div class="t" style="left:603.8px;top:651.67px;font-size:12.08px;line-height:13.49px;color:#333;font-weight:400;font-family:'Liberation Sans', sans-serif;">12</div>
<div class="t" style="left:645px;width:87.3px;text-align:right;top:651.67px;font-size:12.08px;line-height:13.49px;color:#222">12</div>
<div class="t" style="left:749.4px;top:651.67px;font-size:12.08px;line-height:13.49px;color:#222;font-weight:400;font-family:'Liberation Sans', sans-serif;">2026-03-05 15:09:30.205487+00</div>
<div class="t" style="left:947.6px;top:651.67px;font-size:12.08px;line-height:13.49px;color:#222;font-weight:400;font-family:'Liberation Sans', sans-serif;">2026-03-05 15:09:30.205487+00</div>
<div class="t" style="left:1145.3px;top:652.35px;font-size:12.43px;line-height:13.88px;color:#222;font-weight:400;font-family:'Liberation Sans', sans-serif;">0xf4ccd97a8762a4fbf0798383decc34612dfd8ae0d2df6c919c4dc0d3c4c469e1</div>
<div class="t" style="left:1600px;width:94.5px;text-align:right;top:651.67px;font-size:12.08px;line-height:13.49px;color:#222">12</div>
<div class="t" style="left:603.8px;top:676.67px;font-size:12.08px;line-height:13.49px;color:#333;font-weight:400;font-family:'Liberation Sans', sans-serif;">13</div>
<div class="t" style="left:645px;width:87.3px;text-align:right;top:676.67px;font-size:12.08px;line-height:13.49px;color:#222">13</div>
<div class="t" style="left:749.4px;top:676.67px;font-size:12.08px;line-height:13.49px;color:#222;font-weight:400;font-family:'Liberation Sans', sans-serif;">2026-03-05 15:09:30.345764+00</div>
<div class="t" style="left:947.6px;top:676.67px;font-size:12.08px;line-height:13.49px;color:#222;font-weight:400;font-family:'Liberation Sans', sans-serif;">2026-03-05 15:09:30.345764+00</div>
<div class="t" style="left:1145.3px;top:677.35px;font-size:12.43px;line-height:13.88px;color:#222;font-weight:400;font-family:'Liberation Sans', sans-serif;">0x77152447acba4145f22bc4c3b91c0e9aee163210707a3f159dd04d29acb91dc1</div>
<div class="t" style="left:1600px;width:94.5px;text-align:right;top:676.67px;font-size:12.08px;line-height:13.49px;color:#222">13</div>
<div class="t" style="left:603.8px;top:701.67px;font-size:12.08px;line-height:13.49px;color:#333;font-weight:400;font-family:'Liberation Sans', sans-serif;">14</div>
<div class="t" style="left:645px;width:87.3px;text-align:right;top:701.67px;font-size:12.08px;line-height:13.49px;color:#222">14</div>
<div class="t" style="left:749.4px;top:701.67px;font-size:12.08px;line-height:13.49px;color:#222;font-weight:400;font-family:'Liberation Sans', sans-serif;">2026-03-05 15:09:30.676916+00</div>
<div class="t" style="left:947.6px;top:701.67px;font-size:12.08px;line-height:13.49px;color:#222;font-weight:400;font-family:'Liberation Sans', sans-serif;">2026-03-05 15:09:30.676916+00</div>
<div class="t" style="left:1145.3px;top:702.35px;font-size:12.43px;line-height:13.88px;color:#222;font-weight:400;font-family:'Liberation Sans', sans-serif;">0x2ee427192f5afa5d63462ddbdd103770bf4e6505c7966fb35c6c9aee6b876151</div>
<div class="t" style="left:1600px;width:94.5px;text-align:right;top:701.67px;font-size:12.08px;line-height:13.49px;color:#222">14</div>
<div class="t" style="left:603.8px;top:726.67px;font-size:12.08px;line-height:13.49px;color:#333;font-weight:400;font-family:'Liberation Sans', sans-serif;">15</div>
<div class="t" style="left:645px;width:87.3px;text-align:right;top:726.67px;font-size:12.08px;line-height:13.49px;color:#222">15</div>
<div class="t" style="left:749.4px;top:726.67px;font-size:12.08px;line-height:13.49px;color:#222;font-weight:400;font-family:'Liberation Sans', sans-serif;">2026-03-05 15:09:34.800831+00</div>
<div class="t" style="left:947.6px;top:726.67px;font-size:12.08px;line-height:13.49px;color:#222;font-weight:400;font-family:'Liberation Sans', sans-serif;">2026-03-05 15:09:34.800831+00</div>
<div class="t" style="left:1145.3px;top:727.53px;font-size:12.23px;line-height:13.66px;color:#222;font-weight:400;font-family:'Liberation Sans', sans-serif;">0x26095a3143cc472d259baebe4541e419a6dc0b8e00ab788a2c5f7cb07ddd49…</div>
<div class="t" style="left:1600px;width:94.5px;text-align:right;top:726.67px;font-size:12.08px;line-height:13.49px;color:#222">15</div>
<div class="b" style="left:1705px;top:370px;width:181px;height:381px;overflow:hidden">
<div class="t" style="left:8px;top:7.35px;font-size:12.43px;line-height:13.88px;color:#222">0x0cf268cf4b8ac9040f3411cb2a7</div>
<div class="t" style="left:8px;top:32.35px;font-size:12.43px;line-height:13.88px;color:#222">0x05032df9dd0c4b8ba641d6b5e1</div>
<div class="t" style="left:8px;top:57.35px;font-size:12.43px;line-height:13.88px;color:#222">0x6f039ba1ece3d09320014ab6e2</div>
<div class="t" style="left:8px;top:82.35px;font-size:12.43px;line-height:13.88px;color:#222">0x509d4fab88770c859ecca55b31</div>
<div class="t" style="left:8px;top:107.35px;font-size:12.43px;line-height:13.88px;color:#222">0xce9562616d805c94d658fd34a9</div>
<div class="t" style="left:8px;top:132.35px;font-size:12.43px;line-height:13.88px;color:#222">0xd23b50436849b68fdf1a1232e8</div>
<div class="t" style="left:8px;top:157.35px;font-size:12.43px;line-height:13.88px;color:#222">0x5b6be4d420bd46129b76fa9b17</div>
<div class="t" style="left:8px;top:182.35px;font-size:12.43px;line-height:13.88px;color:#222">0xc3f1ba9129bf6bc1e982e7817c</div>
<div class="t" style="left:8px;top:207.35px;font-size:12.43px;line-height:13.88px;color:#222">0x89491a396cb5610292e8cf67d2</div>
<div class="t" style="left:8px;top:232.35px;font-size:12.43px;line-height:13.88px;color:#222">0x39c2a7b028fab85c84c99cae54</div>
<div class="t" style="left:8px;top:257.35px;font-size:12.43px;line-height:13.88px;color:#222">0xec2dd503f2f4e7a468f83b765e</div>
<div class="t" style="left:8px;top:282.35px;font-size:12.43px;line-height:13.88px;color:#222">0xfa8901865b8360228edeb3fa90</div>
<div class="t" style="left:8px;top:307.35px;font-size:12.43px;line-height:13.88px;color:#222">0x3676a60e1e8b491e7b64adc5d1</div>
<div class="t" style="left:8px;top:332.35px;font-size:12.43px;line-height:13.88px;color:#222">0x9e0cb47ef20d678ff17b454244</div>
<div class="t" style="left:8px;top:357.35px;font-size:12.43px;line-height:13.88px;color:#222">0x5f5c00dab5bec63fc55922b1c0</div>
</div>
<div class="b" style="left:1051px;top:547px;width:31px;height:30px;background:#fff;border:1px solid #dde0e6;border-radius:5px;box-shadow:0 1px 2px rgba(0,0,0,0.08)"></div>
<svg class="b" style="left:1058px;top:554px;overflow:visible;" width="15" height="15" viewBox="0 0 15 15"><circle cx="7.5" cy="7.5" r="6" fill="none" stroke="#222" stroke-width="1.3"/><path d="M3.3 11.7L11.7 3.3" stroke="#222" stroke-width="1.3"/></svg>
</body></html>
